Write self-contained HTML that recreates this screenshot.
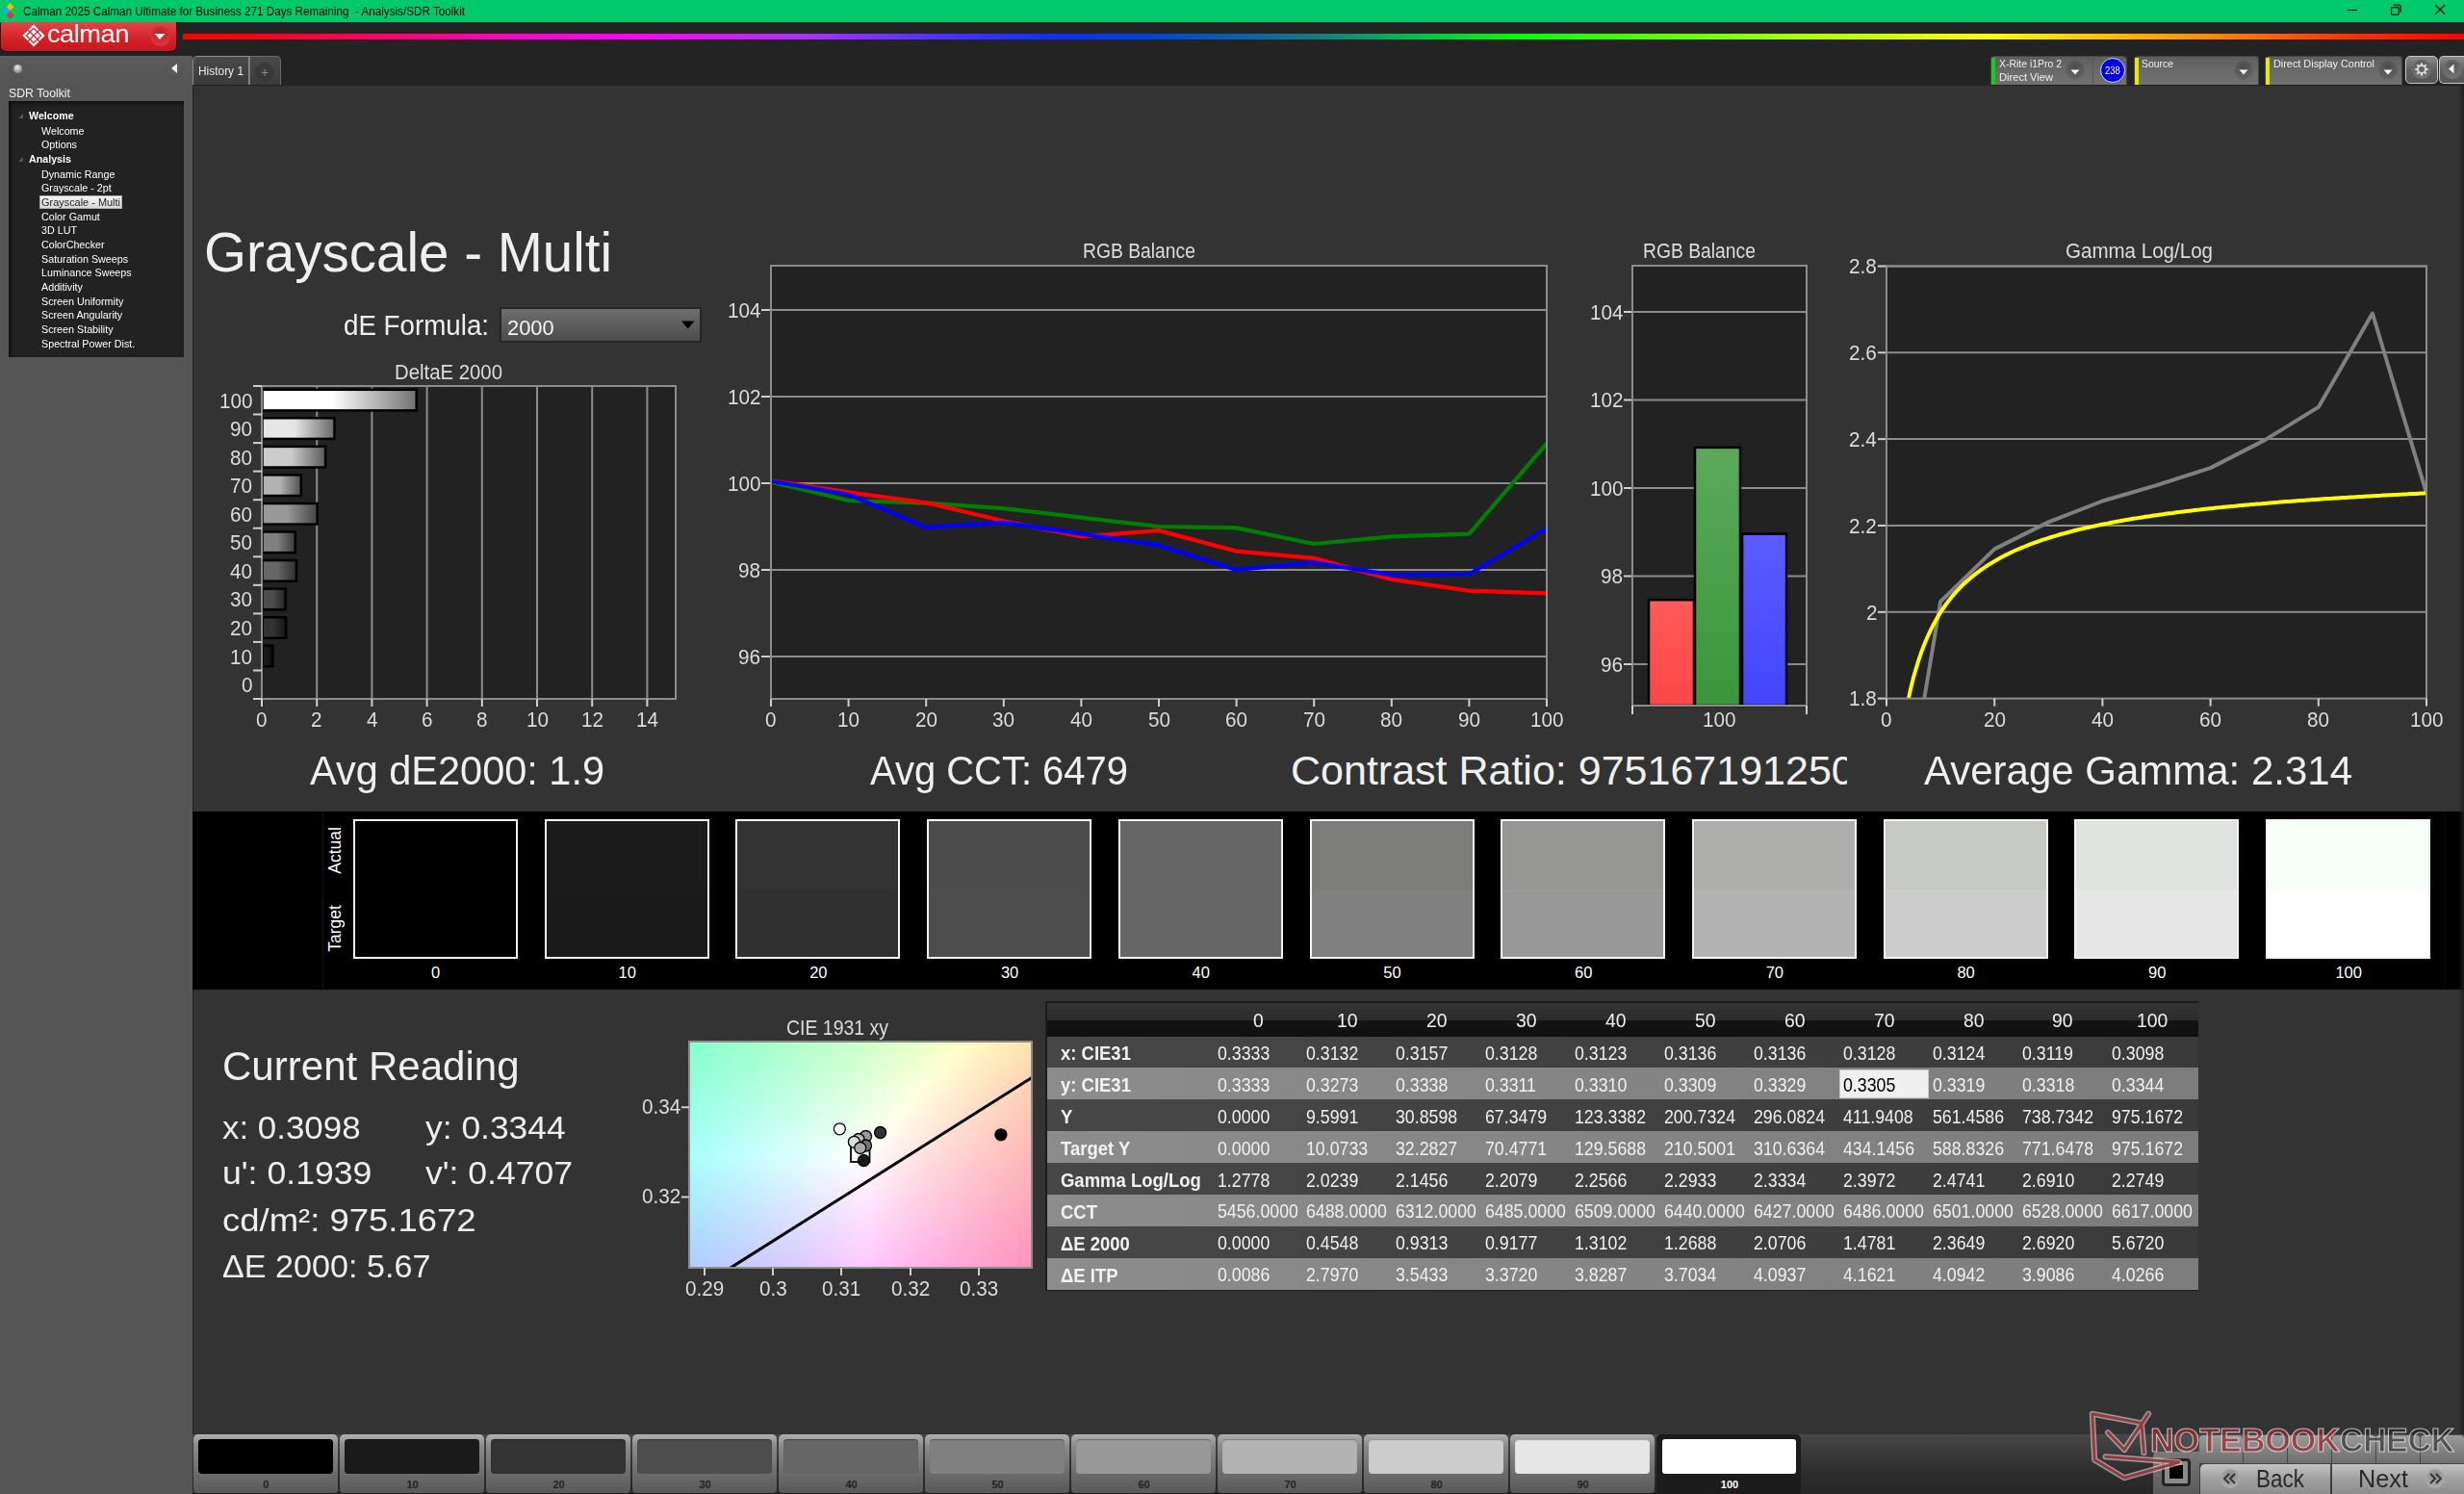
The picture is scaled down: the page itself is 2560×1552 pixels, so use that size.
<!DOCTYPE html>
<html><head><meta charset="utf-8"><title>Calman - Grayscale Multi</title>
<style>
html,body{margin:0;padding:0;}
body{width:2560px;height:1552px;overflow:hidden;position:relative;background:#333;font-family:"Liberation Sans",sans-serif;}
.b{position:absolute;}
.t{position:absolute;white-space:pre;transform-origin:0 50%;}
svg.b{overflow:visible;}
</style></head><body>
<div class="b" style="left:0px;top:0px;width:2560px;height:23px;background:#00c96b;"></div>
<svg class="b" style="left:1px;top:2px" width="19" height="19" viewBox="0 0 19 19"><path d="M9.5 1 L13.5 5 L9.5 9 L5.5 5Z" fill="#f0c000"/><path d="M14 5.5 L18 9.5 L14 13.5 L10 9.5Z" fill="#30c030"/><path d="M5 5.5 L9 9.5 L5 13.5 L1 9.5Z" fill="#30a0f0"/><path d="M9.5 10 L13.5 14 L9.5 18 L5.5 14Z" fill="#e03060"/></svg>
<div class="t" style="left:24.0px;top:5.9px;font-size:12.5px;line-height:12.5px;color:#000;transform:scaleX(0.9350);">Calman 2025 Calman Ultimate for Business 271 Days Remaining  - Analysis/SDR Toolkit</div>
<div class="b" style="left:2439px;top:10px;width:10px;height:1px;background:#000;"></div>
<svg class="b" style="left:2482px;top:3px" width="14" height="14"><rect x="2.6" y="4.6" width="7.6" height="7.6" rx="1" fill="none" stroke="#000" stroke-width="1.1"/><path d="M4.8 2.3 H10.6 Q12.2 2.3 12.2 3.9 V9.8" fill="none" stroke="#000" stroke-width="1.1"/></svg>
<svg class="b" style="left:2529px;top:4px" width="13" height="12"><path d="M1 1 L11.2 10.8 M11.2 1 L1 10.8" stroke="#000" stroke-width="1.1"/></svg>
<div class="b" style="left:0px;top:23px;width:2560px;height:35px;background:#232323;"></div>
<div class="b" style="left:1px;top:23px;width:182px;height:30px;background:linear-gradient(#e3454a,#d42027 60%,#c8141a);border-radius:0 0 5px 5px;box-shadow:0 1px 1px #111;"></div>
<svg class="b" style="left:21.5px;top:24.3px" width="26" height="26" viewBox="0 0 26 26"><g transform="rotate(45 13 13)"><rect x="4.8" y="4.8" width="16.4" height="16.4" fill="#fff"/><rect x="7.6" y="7.6" width="10.8" height="10.8" fill="none" stroke="#d42027" stroke-width="1.2"/><path d="M13 4.5 V21.5 M4.5 13 H21.5" stroke="#d42027" stroke-width="1.3"/></g></svg>
<div class="t" style="left:49.0px;top:22.0px;font-size:26px;line-height:26px;color:#fff;transform:scaleX(1.0500);letter-spacing:-0.5px;">calman</div>
<div class="b" style="left:156px;top:27px;width:21px;height:21px;border-radius:50%;background:radial-gradient(circle at 50% 35%,#c81a20,#d83a3f 80%);"></div>
<svg class="b" style="left:159px;top:34px" width="14" height="8"><path d="M1.5 1 L12.5 1 L7 7Z" fill="#fff"/></svg>
<div class="b" style="left:190px;top:35px;width:2370px;height:6px;background:linear-gradient(to right,#ff0000 0%,#ff0010 3%,#ff0070 9%,#ff00d0 15%,#ff00ff 20%,#b030ff 27%,#6030ff 32%,#1030ff 37.6%,#0040e0 42%,#108080 50%,#00d040 55%,#00ff00 58.6%,#a0ff00 70%,#ffff00 79%,#ff8000 89.5%,#ff3000 95%,#ff0000 100%);"></div>
<div class="b" style="left:0px;top:58px;width:200px;height:1494px;background:#555555;"></div>
<div class="b" style="left:0px;top:58px;width:200px;height:30px;background:linear-gradient(#5c5c5c,#555);border-radius:0 6px 0 0;"></div>
<div class="b" style="left:9px;top:62px;width:20px;height:20px;border-radius:50%;background:radial-gradient(circle at 50% 40%,#5a5a5a 40%,#4a4a4a);"></div>
<div class="b" style="left:14px;top:67px;width:9px;height:9px;border-radius:50%;background:radial-gradient(circle at 45% 35%,#eee,#999 60%,#666);"></div>
<div class="b" style="left:171px;top:62px;width:20px;height:20px;border-radius:50%;background:radial-gradient(circle at 50% 40%,#5a5a5a 40%,#4a4a4a);"></div>
<svg class="b" style="left:177px;top:66px" width="8" height="10"><path d="M7 0 L7 10 L1 5Z" fill="#eee"/></svg>
<div class="t" style="left:9.0px;top:90.0px;font-size:13px;line-height:13px;color:#f0f0f0;transform:scaleX(0.9458);">SDR Toolkit</div>
<div class="b" style="left:9px;top:105px;width:182px;height:266px;background:#222;box-shadow:inset 2px 2px 4px #0c0c0c;"></div>
<div class="t" style="left:30.0px;top:115.2px;font-size:11.3px;line-height:11.3px;color:#ffffff;font-weight:bold;transform:scaleX(0.9450);">Welcome</div>
<div class="t" style="left:43.0px;top:131.2px;font-size:11.3px;line-height:11.3px;color:#ffffff;transform:scaleX(0.9500);">Welcome</div>
<div class="t" style="left:43.0px;top:145.2px;font-size:11.3px;line-height:11.3px;color:#ffffff;transform:scaleX(0.9500);">Options</div>
<div class="t" style="left:30.0px;top:160.2px;font-size:11.3px;line-height:11.3px;color:#ffffff;font-weight:bold;transform:scaleX(0.9450);">Analysis</div>
<div class="t" style="left:43.0px;top:176.2px;font-size:11.3px;line-height:11.3px;color:#ffffff;transform:scaleX(0.9500);">Dynamic Range</div>
<div class="t" style="left:43.0px;top:190.2px;font-size:11.3px;line-height:11.3px;color:#ffffff;transform:scaleX(0.9500);">Grayscale - 2pt</div>
<div class="b" style="left:41px;top:203px;width:86px;height:14px;background:linear-gradient(#f4f4f4,#d8d8d8);border:1px solid #aaa;box-sizing:border-box;"></div>
<div class="t" style="left:43.0px;top:205.1px;font-size:11.3px;line-height:11.3px;color:#222;transform:scaleX(0.9674);">Grayscale - Multi</div>
<div class="t" style="left:43.0px;top:220.2px;font-size:11.3px;line-height:11.3px;color:#ffffff;transform:scaleX(0.9500);">Color Gamut</div>
<div class="t" style="left:43.0px;top:234.2px;font-size:11.3px;line-height:11.3px;color:#ffffff;transform:scaleX(0.9500);">3D LUT</div>
<div class="t" style="left:43.0px;top:249.2px;font-size:11.3px;line-height:11.3px;color:#ffffff;transform:scaleX(0.9500);">ColorChecker</div>
<div class="t" style="left:43.0px;top:264.2px;font-size:11.3px;line-height:11.3px;color:#ffffff;transform:scaleX(0.9500);">Saturation Sweeps</div>
<div class="t" style="left:43.0px;top:278.2px;font-size:11.3px;line-height:11.3px;color:#ffffff;transform:scaleX(0.9500);">Luminance Sweeps</div>
<div class="t" style="left:43.0px;top:293.2px;font-size:11.3px;line-height:11.3px;color:#ffffff;transform:scaleX(0.9500);">Additivity</div>
<div class="t" style="left:43.0px;top:308.2px;font-size:11.3px;line-height:11.3px;color:#ffffff;transform:scaleX(0.9500);">Screen Uniformity</div>
<div class="t" style="left:43.0px;top:322.2px;font-size:11.3px;line-height:11.3px;color:#ffffff;transform:scaleX(0.9500);">Screen Angularity</div>
<div class="t" style="left:43.0px;top:337.2px;font-size:11.3px;line-height:11.3px;color:#ffffff;transform:scaleX(0.9500);">Screen Stability</div>
<div class="t" style="left:43.0px;top:352.2px;font-size:11.3px;line-height:11.3px;color:#ffffff;transform:scaleX(0.9500);">Spectral Power Dist.</div>
<svg class="b" style="left:19px;top:118px" width="6" height="6"><path d="M5 0 L5 5 L0 5Z" fill="#555"/></svg>
<svg class="b" style="left:19px;top:163px" width="6" height="6"><path d="M5 0 L5 5 L0 5Z" fill="#555"/></svg>
<div class="b" style="left:200px;top:58px;width:2360px;height:30px;background:#232323;"></div>
<div class="b" style="left:200px;top:58px;width:59px;height:30px;background:linear-gradient(#4a4a4a,#3a3a3a);border:1px solid #8a8a8a;border-bottom:none;border-radius:5px 0 0 0;box-sizing:border-box;"></div>
<div class="b" style="left:259px;top:58px;width:33px;height:30px;background:linear-gradient(#4a4a4a,#3a3a3a);border:1px solid #6a6a6a;border-bottom:none;border-left:1px solid #777;border-radius:0 5px 0 0;box-sizing:border-box;"></div>
<div class="t" style="left:206.0px;top:68.4px;font-size:12.5px;line-height:12.5px;color:#e8e8e8;transform:scaleX(0.9531);">History 1</div>
<div class="b" style="left:265px;top:65px;width:20px;height:20px;border-radius:50%;background:radial-gradient(circle at 50% 40%,#3c3c3c,#343434);"></div>
<div class="t" style="left:270.9px;top:68.1px;font-size:14px;line-height:14px;color:#888;">+</div>
<div class="b" style="left:200px;top:88px;width:2360px;height:1402px;background:#333333;"></div>
<div class="b" style="left:200px;top:88px;width:2360px;height:1px;background:#222;"></div>
<div class="b" style="left:200px;top:88px;width:1px;height:1402px;background:#222;"></div>
<div class="b" style="left:2068px;top:58px;width:142px;height:30px;background:linear-gradient(#5e5e5e,#6c6c6c 60%,#707070);border-radius:4px 4px 0 0;border:1px solid #444;border-bottom:none;box-sizing:border-box;"></div>
<div class="b" style="left:2069px;top:60px;width:4px;height:28px;background:#10d010;"></div>
<div class="t" style="left:2077.0px;top:61.3px;font-size:11.5px;line-height:11.5px;color:#f0f0f0;transform:scaleX(0.9081);">X-Rite i1Pro 2</div>
<div class="t" style="left:2077.0px;top:75.3px;font-size:11.5px;line-height:11.5px;color:#f0f0f0;transform:scaleX(0.9665);">Direct View</div>
<div class="b" style="left:2146px;top:63px;width:20px;height:20px;border-radius:50%;background:radial-gradient(circle at 50% 35%,#4a4a4a,#666 80%);"></div>
<svg class="b" style="left:2151px;top:72px" width="10" height="6"><path d="M0.5 0.5 L9.5 0.5 L5 5.5Z" fill="#fff"/></svg>
<div class="b" style="left:2174px;top:60px;width:1px;height:28px;background:#555;"></div>
<div class="b" style="left:2182px;top:60px;width:26px;height:26px;border-radius:50%;background:#0000e8;border:1px solid #cfd8ff;box-sizing:border-box;"></div>
<div class="t" style="left:2187.1px;top:68.5px;font-size:10px;line-height:10px;color:#fff;transform:scaleX(0.9500);">238</div>
<div class="b" style="left:2217px;top:58px;width:130px;height:30px;background:linear-gradient(#5e5e5e,#6c6c6c 60%,#707070);border-radius:4px 4px 0 0;border:1px solid #444;border-bottom:none;box-sizing:border-box;"></div>
<div class="b" style="left:2218px;top:60px;width:4px;height:28px;background:#e8e800;"></div>
<div class="t" style="left:2225.0px;top:61.3px;font-size:11.5px;line-height:11.5px;color:#f0f0f0;transform:scaleX(0.9057);">Source</div>
<div class="b" style="left:2321px;top:63px;width:20px;height:20px;border-radius:50%;background:radial-gradient(circle at 50% 35%,#4a4a4a,#666 80%);"></div>
<svg class="b" style="left:2326px;top:72px" width="10" height="6"><path d="M0.5 0.5 L9.5 0.5 L5 5.5Z" fill="#fff"/></svg>
<div class="b" style="left:2353px;top:58px;width:143px;height:30px;background:linear-gradient(#5e5e5e,#6c6c6c 60%,#707070);border-radius:4px 4px 0 0;border:1px solid #444;border-bottom:none;box-sizing:border-box;"></div>
<div class="b" style="left:2354px;top:60px;width:4px;height:28px;background:#e8e800;"></div>
<div class="t" style="left:2362.0px;top:61.3px;font-size:11.5px;line-height:11.5px;color:#f0f0f0;transform:scaleX(0.9443);">Direct Display Control</div>
<div class="b" style="left:2471px;top:63px;width:20px;height:20px;border-radius:50%;background:radial-gradient(circle at 50% 35%,#4a4a4a,#666 80%);"></div>
<svg class="b" style="left:2476px;top:72px" width="10" height="6"><path d="M0.5 0.5 L9.5 0.5 L5 5.5Z" fill="#fff"/></svg>
<div class="b" style="left:2499px;top:58px;width:34px;height:29px;background:linear-gradient(#8a8a8a,#606060 50%,#555);border:1px solid #c8c8c8;border-radius:5px;box-sizing:border-box;"></div>
<div class="b" style="left:2506px;top:62px;width:20px;height:20px;border-radius:50%;background:radial-gradient(circle at 50% 30%,#555,#7a7a7a 90%);"></div>
<svg class="b" style="left:2509px;top:65px" width="14" height="14" viewBox="0 0 14 14"><g fill="#d8d8d8"><rect x="6" y="0.3" width="2" height="3" transform="rotate(0 7 7)"/><rect x="6" y="0.3" width="2" height="3" transform="rotate(45 7 7)"/><rect x="6" y="0.3" width="2" height="3" transform="rotate(90 7 7)"/><rect x="6" y="0.3" width="2" height="3" transform="rotate(135 7 7)"/><rect x="6" y="0.3" width="2" height="3" transform="rotate(180 7 7)"/><rect x="6" y="0.3" width="2" height="3" transform="rotate(225 7 7)"/><rect x="6" y="0.3" width="2" height="3" transform="rotate(270 7 7)"/><rect x="6" y="0.3" width="2" height="3" transform="rotate(315 7 7)"/></g><circle cx="7" cy="7" r="4" fill="none" stroke="#d8d8d8" stroke-width="2"/><circle cx="7" cy="7" r="2.3" fill="#666"/></svg>
<div class="b" style="left:2534px;top:58px;width:26px;height:29px;background:linear-gradient(#8a8a8a,#606060 50%,#555);border:1px solid #c8c8c8;border-right:none;border-radius:5px 0 0 5px;box-sizing:border-box;"></div>
<div class="b" style="left:2538px;top:62px;width:20px;height:20px;border-radius:50%;background:radial-gradient(circle at 50% 30%,#555,#7a7a7a 90%);"></div>
<svg class="b" style="left:2543px;top:66px" width="8" height="12"><path d="M6.5 0.5 L6.5 10.5 L1 5.5Z" fill="#eee"/></svg>
<div class="t" style="left:212.0px;top:232.9px;font-size:58px;line-height:58px;color:#efefef;transform:scaleX(0.9746);">Grayscale - Multi</div>
<div class="t" style="left:357.0px;top:323.5px;font-size:29px;line-height:29px;color:#f0f0f0;transform:scaleX(0.9561);">dE Formula:</div>
<div class="b" style="left:519px;top:319px;width:210px;height:37px;background:linear-gradient(#6e6e6e,#4c4c4c);border:2px solid #262626;box-sizing:border-box;"></div>
<div class="t" style="left:527.0px;top:330.4px;font-size:22px;line-height:22px;color:#f4f4f4;transform:scaleX(0.9911);">2000</div>
<svg class="b" style="left:708px;top:333px" width="14" height="9"><path d="M0 0.5 L13.5 0.5 L6.75 8.5Z" fill="#000"/></svg>
<div class="t" style="left:410.0px;top:375.5px;font-size:21.8px;line-height:21.8px;color:#dcdcdc;transform:scaleX(0.9335);">DeltaE 2000</div>
<svg class="b" style="left:255px;top:395px" width="460" height="350" viewBox="255 395 460 350">
<rect x="272" y="401" width="430" height="325" fill="#222"/>
<line x1="329.2" y1="401" x2="329.2" y2="726" stroke="#8c8c8c" stroke-width="2"/>
<line x1="386.4" y1="401" x2="386.4" y2="726" stroke="#8c8c8c" stroke-width="2"/>
<line x1="443.6" y1="401" x2="443.6" y2="726" stroke="#8c8c8c" stroke-width="2"/>
<line x1="500.8" y1="401" x2="500.8" y2="726" stroke="#8c8c8c" stroke-width="2"/>
<line x1="558.0" y1="401" x2="558.0" y2="726" stroke="#8c8c8c" stroke-width="2"/>
<line x1="615.2" y1="401" x2="615.2" y2="726" stroke="#8c8c8c" stroke-width="2"/>
<line x1="672.4" y1="401" x2="672.4" y2="726" stroke="#8c8c8c" stroke-width="2"/>
<defs>
<linearGradient id="g0" x1="0" x2="1" y1="0" y2="0"><stop offset="0" stop-color="rgb(0,0,0)"/><stop offset="0.45" stop-color="rgb(0,0,0)"/><stop offset="1" stop-color="rgb(0,0,0)"/></linearGradient>
<linearGradient id="g1" x1="0" x2="1" y1="0" y2="0"><stop offset="0" stop-color="rgb(26,26,26)"/><stop offset="0.45" stop-color="rgb(26,26,26)"/><stop offset="1" stop-color="rgb(11,11,11)"/></linearGradient>
<linearGradient id="g2" x1="0" x2="1" y1="0" y2="0"><stop offset="0" stop-color="rgb(51,51,51)"/><stop offset="0.45" stop-color="rgb(51,51,51)"/><stop offset="1" stop-color="rgb(22,22,22)"/></linearGradient>
<linearGradient id="g3" x1="0" x2="1" y1="0" y2="0"><stop offset="0" stop-color="rgb(77,77,77)"/><stop offset="0.45" stop-color="rgb(77,77,77)"/><stop offset="1" stop-color="rgb(34,34,34)"/></linearGradient>
<linearGradient id="g4" x1="0" x2="1" y1="0" y2="0"><stop offset="0" stop-color="rgb(102,102,102)"/><stop offset="0.45" stop-color="rgb(102,102,102)"/><stop offset="1" stop-color="rgb(45,45,45)"/></linearGradient>
<linearGradient id="g5" x1="0" x2="1" y1="0" y2="0"><stop offset="0" stop-color="rgb(128,128,128)"/><stop offset="0.45" stop-color="rgb(128,128,128)"/><stop offset="1" stop-color="rgb(57,57,57)"/></linearGradient>
<linearGradient id="g6" x1="0" x2="1" y1="0" y2="0"><stop offset="0" stop-color="rgb(153,153,153)"/><stop offset="0.45" stop-color="rgb(153,153,153)"/><stop offset="1" stop-color="rgb(68,68,68)"/></linearGradient>
<linearGradient id="g7" x1="0" x2="1" y1="0" y2="0"><stop offset="0" stop-color="rgb(179,179,179)"/><stop offset="0.45" stop-color="rgb(179,179,179)"/><stop offset="1" stop-color="rgb(80,80,80)"/></linearGradient>
<linearGradient id="g8" x1="0" x2="1" y1="0" y2="0"><stop offset="0" stop-color="rgb(204,204,204)"/><stop offset="0.45" stop-color="rgb(204,204,204)"/><stop offset="1" stop-color="rgb(91,91,91)"/></linearGradient>
<linearGradient id="g9" x1="0" x2="1" y1="0" y2="0"><stop offset="0" stop-color="rgb(230,230,230)"/><stop offset="0.45" stop-color="rgb(230,230,230)"/><stop offset="1" stop-color="rgb(103,103,103)"/></linearGradient>
<linearGradient id="g10" x1="0" x2="1" y1="0" y2="0"><stop offset="0" stop-color="rgb(255,255,255)"/><stop offset="0.45" stop-color="rgb(255,255,255)"/><stop offset="1" stop-color="rgb(114,114,114)"/></linearGradient>
</defs>
<rect x="272.5" y="670.7" width="11.0" height="21.6" fill="url(#g1)" stroke="#000" stroke-width="2.5"/>
<rect x="272.5" y="641.2" width="24.6" height="21.6" fill="url(#g2)" stroke="#000" stroke-width="2.5"/>
<rect x="272.5" y="611.6" width="24.2" height="21.6" fill="url(#g3)" stroke="#000" stroke-width="2.5"/>
<rect x="272.5" y="582.1" width="35.5" height="21.6" fill="url(#g4)" stroke="#000" stroke-width="2.5"/>
<rect x="272.5" y="552.5" width="34.3" height="21.6" fill="url(#g5)" stroke="#000" stroke-width="2.5"/>
<rect x="272.5" y="523.0" width="57.2" height="21.6" fill="url(#g6)" stroke="#000" stroke-width="2.5"/>
<rect x="272.5" y="493.4" width="40.3" height="21.6" fill="url(#g7)" stroke="#000" stroke-width="2.5"/>
<rect x="272.5" y="463.9" width="65.6" height="21.6" fill="url(#g8)" stroke="#000" stroke-width="2.5"/>
<rect x="272.5" y="434.3" width="75.0" height="21.6" fill="url(#g9)" stroke="#000" stroke-width="2.5"/>
<rect x="272.5" y="404.8" width="160.2" height="21.6" fill="url(#g10)" stroke="#000" stroke-width="2.5"/>
<rect x="272" y="401" width="430" height="325" fill="none" stroke="#8c8c8c" stroke-width="2"/>
<line x1="263" y1="726.0" x2="272" y2="726.0" stroke="#cfcfcf" stroke-width="2"/>
<line x1="263" y1="696.5" x2="272" y2="696.5" stroke="#cfcfcf" stroke-width="2"/>
<line x1="263" y1="666.9" x2="272" y2="666.9" stroke="#cfcfcf" stroke-width="2"/>
<line x1="263" y1="637.4" x2="272" y2="637.4" stroke="#cfcfcf" stroke-width="2"/>
<line x1="263" y1="607.8" x2="272" y2="607.8" stroke="#cfcfcf" stroke-width="2"/>
<line x1="263" y1="578.3" x2="272" y2="578.3" stroke="#cfcfcf" stroke-width="2"/>
<line x1="263" y1="548.7" x2="272" y2="548.7" stroke="#cfcfcf" stroke-width="2"/>
<line x1="263" y1="519.2" x2="272" y2="519.2" stroke="#cfcfcf" stroke-width="2"/>
<line x1="263" y1="489.6" x2="272" y2="489.6" stroke="#cfcfcf" stroke-width="2"/>
<line x1="263" y1="460.1" x2="272" y2="460.1" stroke="#cfcfcf" stroke-width="2"/>
<line x1="263" y1="430.5" x2="272" y2="430.5" stroke="#cfcfcf" stroke-width="2"/>
<line x1="263" y1="401.0" x2="272" y2="401.0" stroke="#cfcfcf" stroke-width="2"/>
<line x1="272.0" y1="726" x2="272.0" y2="734" stroke="#cfcfcf" stroke-width="2"/>
<line x1="329.2" y1="726" x2="329.2" y2="734" stroke="#cfcfcf" stroke-width="2"/>
<line x1="386.4" y1="726" x2="386.4" y2="734" stroke="#cfcfcf" stroke-width="2"/>
<line x1="443.6" y1="726" x2="443.6" y2="734" stroke="#cfcfcf" stroke-width="2"/>
<line x1="500.8" y1="726" x2="500.8" y2="734" stroke="#cfcfcf" stroke-width="2"/>
<line x1="558.0" y1="726" x2="558.0" y2="734" stroke="#cfcfcf" stroke-width="2"/>
<line x1="615.2" y1="726" x2="615.2" y2="734" stroke="#cfcfcf" stroke-width="2"/>
<line x1="672.4" y1="726" x2="672.4" y2="734" stroke="#cfcfcf" stroke-width="2"/>
</svg>
<div class="t" style="left:250.5px;top:701.0px;font-size:22.5px;line-height:22.5px;color:#dcdcdc;transform:scaleX(0.9200);">0</div>
<div class="t" style="left:239.0px;top:671.5px;font-size:22.5px;line-height:22.5px;color:#dcdcdc;transform:scaleX(0.9200);">10</div>
<div class="t" style="left:239.0px;top:641.9px;font-size:22.5px;line-height:22.5px;color:#dcdcdc;transform:scaleX(0.9200);">20</div>
<div class="t" style="left:239.0px;top:612.4px;font-size:22.5px;line-height:22.5px;color:#dcdcdc;transform:scaleX(0.9200);">30</div>
<div class="t" style="left:239.0px;top:582.9px;font-size:22.5px;line-height:22.5px;color:#dcdcdc;transform:scaleX(0.9200);">40</div>
<div class="t" style="left:239.0px;top:553.3px;font-size:22.5px;line-height:22.5px;color:#dcdcdc;transform:scaleX(0.9200);">50</div>
<div class="t" style="left:239.0px;top:523.8px;font-size:22.5px;line-height:22.5px;color:#dcdcdc;transform:scaleX(0.9200);">60</div>
<div class="t" style="left:239.0px;top:494.2px;font-size:22.5px;line-height:22.5px;color:#dcdcdc;transform:scaleX(0.9200);">70</div>
<div class="t" style="left:239.0px;top:464.7px;font-size:22.5px;line-height:22.5px;color:#dcdcdc;transform:scaleX(0.9200);">80</div>
<div class="t" style="left:239.0px;top:435.1px;font-size:22.5px;line-height:22.5px;color:#dcdcdc;transform:scaleX(0.9200);">90</div>
<div class="t" style="left:227.5px;top:405.6px;font-size:22.5px;line-height:22.5px;color:#dcdcdc;transform:scaleX(0.9200);">100</div>
<div class="t" style="left:266.2px;top:736.5px;font-size:22.5px;line-height:22.5px;color:#dcdcdc;transform:scaleX(0.9200);">0</div>
<div class="t" style="left:323.4px;top:736.5px;font-size:22.5px;line-height:22.5px;color:#dcdcdc;transform:scaleX(0.9200);">2</div>
<div class="t" style="left:380.6px;top:736.5px;font-size:22.5px;line-height:22.5px;color:#dcdcdc;transform:scaleX(0.9200);">4</div>
<div class="t" style="left:437.8px;top:736.5px;font-size:22.5px;line-height:22.5px;color:#dcdcdc;transform:scaleX(0.9200);">6</div>
<div class="t" style="left:495.0px;top:736.5px;font-size:22.5px;line-height:22.5px;color:#dcdcdc;transform:scaleX(0.9200);">8</div>
<div class="t" style="left:546.5px;top:736.5px;font-size:22.5px;line-height:22.5px;color:#dcdcdc;transform:scaleX(0.9200);">10</div>
<div class="t" style="left:603.7px;top:736.5px;font-size:22.5px;line-height:22.5px;color:#dcdcdc;transform:scaleX(0.9200);">12</div>
<div class="t" style="left:660.9px;top:736.5px;font-size:22.5px;line-height:22.5px;color:#dcdcdc;transform:scaleX(0.9200);">14</div>
<div class="t" style="left:1124.5px;top:250.0px;font-size:21.8px;line-height:21.8px;color:#dcdcdc;transform:scaleX(0.8859);">RGB Balance</div>
<svg class="b" style="left:780px;top:260px" width="840" height="480" viewBox="780 260 840 480">
<rect x="801" y="276" width="806" height="450" fill="#222"/>
<line x1="801" y1="322.0" x2="1607" y2="322.0" stroke="#8c8c8c" stroke-width="2"/>
<line x1="791" y1="322.0" x2="801" y2="322.0" stroke="#cfcfcf" stroke-width="2"/>
<line x1="801" y1="412.0" x2="1607" y2="412.0" stroke="#8c8c8c" stroke-width="2"/>
<line x1="791" y1="412.0" x2="801" y2="412.0" stroke="#cfcfcf" stroke-width="2"/>
<line x1="801" y1="502.0" x2="1607" y2="502.0" stroke="#8c8c8c" stroke-width="2"/>
<line x1="791" y1="502.0" x2="801" y2="502.0" stroke="#cfcfcf" stroke-width="2"/>
<line x1="801" y1="592.0" x2="1607" y2="592.0" stroke="#8c8c8c" stroke-width="2"/>
<line x1="791" y1="592.0" x2="801" y2="592.0" stroke="#cfcfcf" stroke-width="2"/>
<line x1="801" y1="682.0" x2="1607" y2="682.0" stroke="#8c8c8c" stroke-width="2"/>
<line x1="791" y1="682.0" x2="801" y2="682.0" stroke="#cfcfcf" stroke-width="2"/>
<polyline points="801.0,500.6 881.6,520.0 962.2,522.7 1042.8,528.1 1123.4,537.6 1204.0,547.0 1284.6,548.4 1365.2,565.0 1445.8,557.4 1526.4,554.7 1607.0,460.6" fill="none" stroke="#008000" stroke-width="4.2" stroke-linejoin="round"/>
<polyline points="801.0,499.3 881.6,511.4 962.2,522.3 1042.8,541.2 1123.4,557.4 1204.0,551.1 1284.6,572.6 1365.2,579.9 1445.8,601.9 1526.4,613.6 1607.0,616.3" fill="none" stroke="#ff0000" stroke-width="4.2" stroke-linejoin="round"/>
<polyline points="801.0,499.8 881.6,513.7 962.2,547.9 1042.8,542.9 1123.4,554.7 1204.0,566.4 1284.6,592.0 1365.2,584.3 1445.8,597.4 1526.4,596.5 1607.0,548.8" fill="none" stroke="#0000ff" stroke-width="4.2" stroke-linejoin="round"/>
<rect x="801" y="276" width="806" height="450" fill="none" stroke="#8c8c8c" stroke-width="2"/>
<line x1="801.0" y1="726" x2="801.0" y2="734" stroke="#cfcfcf" stroke-width="2"/>
<line x1="881.6" y1="726" x2="881.6" y2="734" stroke="#cfcfcf" stroke-width="2"/>
<line x1="962.2" y1="726" x2="962.2" y2="734" stroke="#cfcfcf" stroke-width="2"/>
<line x1="1042.8" y1="726" x2="1042.8" y2="734" stroke="#cfcfcf" stroke-width="2"/>
<line x1="1123.4" y1="726" x2="1123.4" y2="734" stroke="#cfcfcf" stroke-width="2"/>
<line x1="1204.0" y1="726" x2="1204.0" y2="734" stroke="#cfcfcf" stroke-width="2"/>
<line x1="1284.6" y1="726" x2="1284.6" y2="734" stroke="#cfcfcf" stroke-width="2"/>
<line x1="1365.2" y1="726" x2="1365.2" y2="734" stroke="#cfcfcf" stroke-width="2"/>
<line x1="1445.8" y1="726" x2="1445.8" y2="734" stroke="#cfcfcf" stroke-width="2"/>
<line x1="1526.4" y1="726" x2="1526.4" y2="734" stroke="#cfcfcf" stroke-width="2"/>
<line x1="1607.0" y1="726" x2="1607.0" y2="734" stroke="#cfcfcf" stroke-width="2"/>
</svg>
<div class="t" style="left:755.5px;top:311.8px;font-size:22.5px;line-height:22.5px;color:#dcdcdc;transform:scaleX(0.9200);">104</div>
<div class="t" style="left:755.5px;top:401.8px;font-size:22.5px;line-height:22.5px;color:#dcdcdc;transform:scaleX(0.9200);">102</div>
<div class="t" style="left:755.5px;top:491.8px;font-size:22.5px;line-height:22.5px;color:#dcdcdc;transform:scaleX(0.9200);">100</div>
<div class="t" style="left:767.0px;top:581.8px;font-size:22.5px;line-height:22.5px;color:#dcdcdc;transform:scaleX(0.9200);">98</div>
<div class="t" style="left:767.0px;top:671.8px;font-size:22.5px;line-height:22.5px;color:#dcdcdc;transform:scaleX(0.9200);">96</div>
<div class="t" style="left:795.2px;top:736.5px;font-size:22.5px;line-height:22.5px;color:#dcdcdc;transform:scaleX(0.9200);">0</div>
<div class="t" style="left:870.1px;top:736.5px;font-size:22.5px;line-height:22.5px;color:#dcdcdc;transform:scaleX(0.9200);">10</div>
<div class="t" style="left:950.7px;top:736.5px;font-size:22.5px;line-height:22.5px;color:#dcdcdc;transform:scaleX(0.9200);">20</div>
<div class="t" style="left:1031.3px;top:736.5px;font-size:22.5px;line-height:22.5px;color:#dcdcdc;transform:scaleX(0.9200);">30</div>
<div class="t" style="left:1111.9px;top:736.5px;font-size:22.5px;line-height:22.5px;color:#dcdcdc;transform:scaleX(0.9200);">40</div>
<div class="t" style="left:1192.5px;top:736.5px;font-size:22.5px;line-height:22.5px;color:#dcdcdc;transform:scaleX(0.9200);">50</div>
<div class="t" style="left:1273.1px;top:736.5px;font-size:22.5px;line-height:22.5px;color:#dcdcdc;transform:scaleX(0.9200);">60</div>
<div class="t" style="left:1353.7px;top:736.5px;font-size:22.5px;line-height:22.5px;color:#dcdcdc;transform:scaleX(0.9200);">70</div>
<div class="t" style="left:1434.3px;top:736.5px;font-size:22.5px;line-height:22.5px;color:#dcdcdc;transform:scaleX(0.9200);">80</div>
<div class="t" style="left:1514.9px;top:736.5px;font-size:22.5px;line-height:22.5px;color:#dcdcdc;transform:scaleX(0.9200);">90</div>
<div class="t" style="left:1589.7px;top:736.5px;font-size:22.5px;line-height:22.5px;color:#dcdcdc;transform:scaleX(0.9200);">100</div>
<div class="t" style="left:1706.5px;top:250.0px;font-size:21.8px;line-height:21.8px;color:#dcdcdc;transform:scaleX(0.8859);">RGB Balance</div>
<svg class="b" style="left:1680px;top:260px" width="210" height="490" viewBox="1680 260 210 490">
<defs><linearGradient id="rg" x1="0" y1="0" x2="0" y2="1"><stop offset="0" stop-color="#ff5a5a"/><stop offset="1" stop-color="#ff4646"/></linearGradient><linearGradient id="gg" x1="0" y1="0" x2="0" y2="1"><stop offset="0" stop-color="#5aaa5a"/><stop offset="1" stop-color="#3a963a"/></linearGradient><linearGradient id="bg" x1="0" y1="0" x2="0" y2="1"><stop offset="0" stop-color="#5c5cff"/><stop offset="1" stop-color="#4444ff"/></linearGradient></defs>
<rect x="1696" y="276" width="181" height="457" fill="#222"/>
<line x1="1696" y1="324.0" x2="1877" y2="324.0" stroke="#8c8c8c" stroke-width="2"/>
<line x1="1687" y1="324.0" x2="1696" y2="324.0" stroke="#cfcfcf" stroke-width="2"/>
<line x1="1696" y1="415.5" x2="1877" y2="415.5" stroke="#8c8c8c" stroke-width="2"/>
<line x1="1687" y1="415.5" x2="1696" y2="415.5" stroke="#cfcfcf" stroke-width="2"/>
<line x1="1696" y1="507.0" x2="1877" y2="507.0" stroke="#8c8c8c" stroke-width="2"/>
<line x1="1687" y1="507.0" x2="1696" y2="507.0" stroke="#cfcfcf" stroke-width="2"/>
<line x1="1696" y1="598.5" x2="1877" y2="598.5" stroke="#8c8c8c" stroke-width="2"/>
<line x1="1687" y1="598.5" x2="1696" y2="598.5" stroke="#cfcfcf" stroke-width="2"/>
<line x1="1696" y1="690.0" x2="1877" y2="690.0" stroke="#8c8c8c" stroke-width="2"/>
<line x1="1687" y1="690.0" x2="1696" y2="690.0" stroke="#cfcfcf" stroke-width="2"/>
<rect x="1713" y="623.2" width="47" height="109.8" fill="url(#rg)" stroke="#000" stroke-width="2.5"/>
<rect x="1761" y="464.9" width="47" height="268.1" fill="url(#gg)" stroke="#000" stroke-width="2.5"/>
<rect x="1810" y="554.6" width="46" height="178.4" fill="url(#bg)" stroke="#000" stroke-width="2.5"/>
<rect x="1696" y="276" width="181" height="457" fill="none" stroke="#8c8c8c" stroke-width="2"/>
<line x1="1696" y1="733" x2="1696" y2="742" stroke="#cfcfcf" stroke-width="2"/>
<line x1="1877" y1="733" x2="1877" y2="742" stroke="#cfcfcf" stroke-width="2"/>
</svg>
<div class="t" style="left:1651.5px;top:313.8px;font-size:22.5px;line-height:22.5px;color:#dcdcdc;transform:scaleX(0.9200);">104</div>
<div class="t" style="left:1651.5px;top:405.3px;font-size:22.5px;line-height:22.5px;color:#dcdcdc;transform:scaleX(0.9200);">102</div>
<div class="t" style="left:1651.5px;top:496.8px;font-size:22.5px;line-height:22.5px;color:#dcdcdc;transform:scaleX(0.9200);">100</div>
<div class="t" style="left:1663.0px;top:588.3px;font-size:22.5px;line-height:22.5px;color:#dcdcdc;transform:scaleX(0.9200);">98</div>
<div class="t" style="left:1663.0px;top:679.8px;font-size:22.5px;line-height:22.5px;color:#dcdcdc;transform:scaleX(0.9200);">96</div>
<div class="t" style="left:1769.2px;top:737.0px;font-size:22.5px;line-height:22.5px;color:#dcdcdc;transform:scaleX(0.9200);">100</div>
<div class="t" style="left:2145.5px;top:250.0px;font-size:21.8px;line-height:21.8px;color:#dcdcdc;transform:scaleX(0.9423);">Gamma Log/Log</div>
<svg class="b" style="left:1940px;top:260px" width="600" height="480" viewBox="1940 260 600 480">
<defs><clipPath id="gc"><rect x="1960" y="276.5" width="561" height="449.1"/></clipPath></defs>
<rect x="1960" y="276.5" width="561" height="449.1" fill="#222"/>
<line x1="1960" y1="276.5" x2="2521" y2="276.5" stroke="#8c8c8c" stroke-width="2"/>
<line x1="1960" y1="366.3" x2="2521" y2="366.3" stroke="#8c8c8c" stroke-width="2"/>
<line x1="1960" y1="456.1" x2="2521" y2="456.1" stroke="#8c8c8c" stroke-width="2"/>
<line x1="1960" y1="546.0" x2="2521" y2="546.0" stroke="#8c8c8c" stroke-width="2"/>
<line x1="1960" y1="635.8" x2="2521" y2="635.8" stroke="#8c8c8c" stroke-width="2"/>
<line x1="1951" y1="276.5" x2="1960" y2="276.5" stroke="#cfcfcf" stroke-width="2"/>
<line x1="1951" y1="366.3" x2="1960" y2="366.3" stroke="#cfcfcf" stroke-width="2"/>
<line x1="1951" y1="456.1" x2="1960" y2="456.1" stroke="#cfcfcf" stroke-width="2"/>
<line x1="1951" y1="546.0" x2="1960" y2="546.0" stroke="#cfcfcf" stroke-width="2"/>
<line x1="1951" y1="635.8" x2="1960" y2="635.8" stroke="#cfcfcf" stroke-width="2"/>
<line x1="1951" y1="725.6" x2="1960" y2="725.6" stroke="#cfcfcf" stroke-width="2"/>
<g clip-path="url(#gc)"><polyline points="1960.0,960.1 2016.1,625.0 2072.2,570.4 2128.3,542.4 2184.4,520.5 2240.5,504.1 2296.6,486.1 2352.7,457.4 2408.8,422.9 2464.9,325.5 2521.0,512.3" fill="none" stroke="#808080" stroke-width="4" stroke-linejoin="round"/>
<polyline points="1965.6,881.7 1968.4,837.7 1971.2,805.6 1974.0,780.4 1976.8,759.8 1979.6,742.6 1982.4,727.9 1985.2,715.1 1988.0,703.8 1990.9,693.8 1993.7,684.9 1996.5,676.8 1999.3,669.4 2002.1,662.7 2004.9,656.6 2007.7,650.9 2010.5,645.7 2013.3,640.8 2016.1,636.2 2018.9,632.0 2021.7,628.0 2024.5,624.2 2027.3,620.7 2030.1,617.4 2032.9,614.2 2035.7,611.3 2038.5,608.4 2041.3,605.8 2044.2,603.2 2047.0,600.8 2049.8,598.4 2052.6,596.2 2055.4,594.1 2058.2,592.0 2061.0,590.1 2063.8,588.2 2066.6,586.4 2069.4,584.7 2072.2,583.0 2075.0,581.4 2077.8,579.8 2080.6,578.3 2083.4,576.9 2086.2,575.5 2089.0,574.1 2091.8,572.8 2094.6,571.5 2097.4,570.3 2100.2,569.1 2103.1,568.0 2105.9,566.8 2108.7,565.7 2111.5,564.7 2114.3,563.7 2117.1,562.7 2119.9,561.7 2122.7,560.7 2125.5,559.8 2128.3,558.9 2131.1,558.0 2133.9,557.2 2136.7,556.3 2139.5,555.5 2142.3,554.7 2145.1,554.0 2147.9,553.2 2150.7,552.5 2153.5,551.7 2156.3,551.0 2159.2,550.3 2162.0,549.6 2164.8,549.0 2167.6,548.3 2170.4,547.7 2173.2,547.1 2176.0,546.5 2178.8,545.9 2181.6,545.3 2184.4,544.7 2187.2,544.1 2190.0,543.6 2192.8,543.0 2195.6,542.5 2198.4,542.0 2201.2,541.5 2204.0,541.0 2206.8,540.5 2209.6,540.0 2212.4,539.5 2215.3,539.0 2218.1,538.6 2220.9,538.1 2223.7,537.7 2226.5,537.3 2229.3,536.8 2232.1,536.4 2234.9,536.0 2237.7,535.6 2240.5,535.2 2243.3,534.8 2246.1,534.4 2248.9,534.0 2251.7,533.6 2254.5,533.2 2257.3,532.9 2260.1,532.5 2262.9,532.1 2265.7,531.8 2268.6,531.4 2271.4,531.1 2274.2,530.8 2277.0,530.4 2279.8,530.1 2282.6,529.8 2285.4,529.5 2288.2,529.1 2291.0,528.8 2293.8,528.5 2296.6,528.2 2299.4,527.9 2302.2,527.6 2305.0,527.3 2307.8,527.1 2310.6,526.8 2313.4,526.5 2316.2,526.2 2319.0,525.9 2321.8,525.7 2324.7,525.4 2327.5,525.1 2330.3,524.9 2333.1,524.6 2335.9,524.4 2338.7,524.1 2341.5,523.9 2344.3,523.6 2347.1,523.4 2349.9,523.2 2352.7,522.9 2355.5,522.7 2358.3,522.4 2361.1,522.2 2363.9,522.0 2366.7,521.8 2369.5,521.5 2372.3,521.3 2375.1,521.1 2377.9,520.9 2380.8,520.7 2383.6,520.5 2386.4,520.3 2389.2,520.1 2392.0,519.9 2394.8,519.7 2397.6,519.5 2400.4,519.3 2403.2,519.1 2406.0,518.9 2408.8,518.7 2411.6,518.5 2414.4,518.3 2417.2,518.1 2420.0,517.9 2422.8,517.8 2425.6,517.6 2428.4,517.4 2431.2,517.2 2434.0,517.0 2436.8,516.9 2439.7,516.7 2442.5,516.5 2445.3,516.4 2448.1,516.2 2450.9,516.0 2453.7,515.9 2456.5,515.7 2459.3,515.5 2462.1,515.4 2464.9,515.2 2467.7,515.1 2470.5,514.9 2473.3,514.8 2476.1,514.6 2478.9,514.5 2481.7,514.3 2484.5,514.2 2487.3,514.0 2490.1,513.9 2492.9,513.7 2495.8,513.6 2498.6,513.4 2501.4,513.3 2504.2,513.1 2507.0,513.0 2509.8,512.9 2512.6,512.7 2515.4,512.6 2518.2,512.5 2521.0,512.3" fill="none" stroke="#ffff00" stroke-width="4"/></g>
<rect x="1960" y="276.5" width="561" height="449.1" fill="none" stroke="#8c8c8c" stroke-width="2"/>
<line x1="1960.0" y1="725.6" x2="1960.0" y2="733.6" stroke="#cfcfcf" stroke-width="2"/>
<line x1="2072.2" y1="725.6" x2="2072.2" y2="733.6" stroke="#cfcfcf" stroke-width="2"/>
<line x1="2184.4" y1="725.6" x2="2184.4" y2="733.6" stroke="#cfcfcf" stroke-width="2"/>
<line x1="2296.6" y1="725.6" x2="2296.6" y2="733.6" stroke="#cfcfcf" stroke-width="2"/>
<line x1="2408.8" y1="725.6" x2="2408.8" y2="733.6" stroke="#cfcfcf" stroke-width="2"/>
<line x1="2521.0" y1="725.6" x2="2521.0" y2="733.6" stroke="#cfcfcf" stroke-width="2"/>
</svg>
<div class="t" style="left:1921.2px;top:266.3px;font-size:22.5px;line-height:22.5px;color:#dcdcdc;transform:scaleX(0.9200);">2.8</div>
<div class="t" style="left:1921.2px;top:356.1px;font-size:22.5px;line-height:22.5px;color:#dcdcdc;transform:scaleX(0.9200);">2.6</div>
<div class="t" style="left:1921.2px;top:445.9px;font-size:22.5px;line-height:22.5px;color:#dcdcdc;transform:scaleX(0.9200);">2.4</div>
<div class="t" style="left:1921.2px;top:535.8px;font-size:22.5px;line-height:22.5px;color:#dcdcdc;transform:scaleX(0.9200);">2.2</div>
<div class="t" style="left:1938.5px;top:625.6px;font-size:22.5px;line-height:22.5px;color:#dcdcdc;transform:scaleX(0.9200);">2</div>
<div class="t" style="left:1921.2px;top:715.4px;font-size:22.5px;line-height:22.5px;color:#dcdcdc;transform:scaleX(0.9200);">1.8</div>
<div class="t" style="left:1954.2px;top:736.5px;font-size:22.5px;line-height:22.5px;color:#dcdcdc;transform:scaleX(0.9200);">0</div>
<div class="t" style="left:2060.7px;top:736.5px;font-size:22.5px;line-height:22.5px;color:#dcdcdc;transform:scaleX(0.9200);">20</div>
<div class="t" style="left:2172.9px;top:736.5px;font-size:22.5px;line-height:22.5px;color:#dcdcdc;transform:scaleX(0.9200);">40</div>
<div class="t" style="left:2285.1px;top:736.5px;font-size:22.5px;line-height:22.5px;color:#dcdcdc;transform:scaleX(0.9200);">60</div>
<div class="t" style="left:2397.3px;top:736.5px;font-size:22.5px;line-height:22.5px;color:#dcdcdc;transform:scaleX(0.9200);">80</div>
<div class="t" style="left:2503.7px;top:736.5px;font-size:22.5px;line-height:22.5px;color:#dcdcdc;transform:scaleX(0.9200);">100</div>
<div class="t" style="left:322.0px;top:778.6px;font-size:43px;line-height:43px;color:#f0f0f0;transform:scaleX(0.9648);">Avg dE2000: 1.9</div>
<div class="t" style="left:904.0px;top:778.6px;font-size:43px;line-height:43px;color:#f0f0f0;transform:scaleX(0.9292);">Avg CCT: 6479</div>
<div class="b" style="left:1330px;top:770px;width:589px;height:60px;overflow:hidden;">
<div class="t" style="left:11px;top:8.6px;font-size:43px;line-height:43px;color:#f0f0f0;transform:scaleX(1.0);">Contrast Ratio: 975167191250000</div></div>
<div class="t" style="left:1999.0px;top:778.6px;font-size:43px;line-height:43px;color:#f0f0f0;transform:scaleX(0.9765);">Average Gamma: 2.314</div>
<div class="b" style="left:200px;top:843px;width:2360px;height:185px;background:#000;"></div>
<div class="b" style="left:335px;top:843px;width:1px;height:185px;background:#141414;"></div>
<div class="b" style="left:2539px;top:843px;width:1px;height:185px;background:#0a0a0a;"></div>
<div class="b" style="left:367.0px;top:851px;width:171px;height:145px;border:2px solid #f4f4f4;box-sizing:border-box;background:linear-gradient(#000000 50%,#000000 50%);"></div>
<div class="t" style="left:448.1px;top:1002.2px;font-size:16.5px;line-height:16.5px;color:#fff;font-family:"Liberation Serif",serif;transform:scaleX(1.0600);">0</div>
<div class="b" style="left:565.7px;top:851px;width:171px;height:145px;border:2px solid #f4f4f4;box-sizing:border-box;background:linear-gradient(#1c1c1c 50%,#1a1a1a 50%);"></div>
<div class="t" style="left:642.5px;top:1002.2px;font-size:16.5px;line-height:16.5px;color:#fff;font-family:"Liberation Serif",serif;transform:scaleX(1.0600);">10</div>
<div class="b" style="left:764.4px;top:851px;width:171px;height:145px;border:2px solid #f4f4f4;box-sizing:border-box;background:linear-gradient(#333333 50%,#303030 50%);"></div>
<div class="t" style="left:841.2px;top:1002.2px;font-size:16.5px;line-height:16.5px;color:#fff;font-family:"Liberation Serif",serif;transform:scaleX(1.0600);">20</div>
<div class="b" style="left:963.1px;top:851px;width:171px;height:145px;border:2px solid #f4f4f4;box-sizing:border-box;background:linear-gradient(#4c4c4c 50%,#4d4d4d 50%);"></div>
<div class="t" style="left:1039.9px;top:1002.2px;font-size:16.5px;line-height:16.5px;color:#fff;font-family:"Liberation Serif",serif;transform:scaleX(1.0600);">30</div>
<div class="b" style="left:1161.8px;top:851px;width:171px;height:145px;border:2px solid #f4f4f4;box-sizing:border-box;background:linear-gradient(#666666 50%,#666666 50%);"></div>
<div class="t" style="left:1238.6px;top:1002.2px;font-size:16.5px;line-height:16.5px;color:#fff;font-family:"Liberation Serif",serif;transform:scaleX(1.0600);">40</div>
<div class="b" style="left:1360.5px;top:851px;width:171px;height:145px;border:2px solid #f4f4f4;box-sizing:border-box;background:linear-gradient(#7c7c7a 50%,#808080 50%);"></div>
<div class="t" style="left:1437.3px;top:1002.2px;font-size:16.5px;line-height:16.5px;color:#fff;font-family:"Liberation Serif",serif;transform:scaleX(1.0600);">50</div>
<div class="b" style="left:1559.2px;top:851px;width:171px;height:145px;border:2px solid #f4f4f4;box-sizing:border-box;background:linear-gradient(#969694 50%,#999999 50%);"></div>
<div class="t" style="left:1636.0px;top:1002.2px;font-size:16.5px;line-height:16.5px;color:#fff;font-family:"Liberation Serif",serif;transform:scaleX(1.0600);">60</div>
<div class="b" style="left:1757.9px;top:851px;width:171px;height:145px;border:2px solid #f4f4f4;box-sizing:border-box;background:linear-gradient(#adadab 50%,#b3b3b3 50%);"></div>
<div class="t" style="left:1834.7px;top:1002.2px;font-size:16.5px;line-height:16.5px;color:#fff;font-family:"Liberation Serif",serif;transform:scaleX(1.0600);">70</div>
<div class="b" style="left:1956.6px;top:851px;width:171px;height:145px;border:2px solid #f4f4f4;box-sizing:border-box;background:linear-gradient(#c6c8c4 50%,#cccccc 50%);"></div>
<div class="t" style="left:2033.4px;top:1002.2px;font-size:16.5px;line-height:16.5px;color:#fff;font-family:"Liberation Serif",serif;transform:scaleX(1.0600);">80</div>
<div class="b" style="left:2155.3px;top:851px;width:171px;height:145px;border:2px solid #f4f4f4;box-sizing:border-box;background:linear-gradient(#dfe3df 50%,#e6e6e6 50%);"></div>
<div class="t" style="left:2232.1px;top:1002.2px;font-size:16.5px;line-height:16.5px;color:#fff;font-family:"Liberation Serif",serif;transform:scaleX(1.0600);">90</div>
<div class="b" style="left:2354.0px;top:851px;width:171px;height:145px;border:2px solid #f4f4f4;box-sizing:border-box;background:linear-gradient(#f7fff9 50%,#ffffff 50%);"></div>
<div class="t" style="left:2426.4px;top:1002.2px;font-size:16.5px;line-height:16.5px;color:#fff;font-family:"Liberation Serif",serif;transform:scaleX(1.0600);">100</div>
<div class="t" style="left:323.7px;top:874.5px;font-size:17.5px;line-height:17px;color:#fff;transform:rotate(-90deg);transform-origin:50% 50%;width:48.6px;text-align:center;">Actual</div>
<div class="t" style="left:323.7px;top:956.0px;font-size:17.5px;line-height:17px;color:#fff;transform:rotate(-90deg);transform-origin:50% 50%;width:48.6px;text-align:center;">Target</div>
<div class="t" style="left:231.0px;top:1086.9px;font-size:42px;line-height:42px;color:#efefef;transform:scaleX(1.0011);">Current Reading</div>
<div class="t" style="left:231.0px;top:1153.7px;font-size:34px;line-height:34px;color:#efefef;transform:scaleX(1.0266);">x: 0.3098</div>
<div class="t" style="left:442.0px;top:1153.7px;font-size:34px;line-height:34px;color:#efefef;transform:scaleX(1.0417);">y: 0.3344</div>
<div class="t" style="left:231.0px;top:1201.2px;font-size:34px;line-height:34px;color:#efefef;transform:scaleX(1.0481);">u&#x27;: 0.1939</div>
<div class="t" style="left:442.0px;top:1201.2px;font-size:34px;line-height:34px;color:#efefef;transform:scaleX(1.0453);">v&#x27;: 0.4707</div>
<div class="t" style="left:231.0px;top:1249.6px;font-size:34px;line-height:34px;color:#efefef;transform:scaleX(1.0729);">cd/m²: 975.1672</div>
<div class="t" style="left:231.0px;top:1298.2px;font-size:34px;line-height:34px;color:#efefef;transform:scaleX(1.0041);">ΔE 2000: 5.67</div>
<div class="t" style="left:817.0px;top:1056.5px;font-size:21.8px;line-height:21.8px;color:#dcdcdc;transform:scaleX(0.8927);">CIE 1931 xy</div>
<svg class="b" style="left:700px;top:1075px" width="380" height="260" viewBox="700 1075 380 260">
<defs><clipPath id="cieclip"><rect x="716" y="1082" width="356" height="235"/></clipPath><filter id="cieblur" x="-10%" y="-10%" width="120%" height="120%"><feGaussianBlur stdDeviation="5"/></filter></defs>
<g clip-path="url(#cieclip)"><g filter="url(#cieblur)">
<rect x="696" y="1062" width="10.5" height="10.5" fill="#7bffc7"/>
<rect x="706" y="1062" width="10.5" height="10.5" fill="#7fffc7"/>
<rect x="716" y="1062" width="10.5" height="10.5" fill="#83ffc7"/>
<rect x="726" y="1062" width="10.5" height="10.5" fill="#86ffc7"/>
<rect x="736" y="1062" width="10.5" height="10.5" fill="#8affc6"/>
<rect x="746" y="1062" width="10.5" height="10.5" fill="#8effc6"/>
<rect x="756" y="1062" width="10.5" height="10.5" fill="#92ffc6"/>
<rect x="766" y="1062" width="10.5" height="10.5" fill="#96ffc6"/>
<rect x="776" y="1062" width="10.5" height="10.5" fill="#9affc6"/>
<rect x="786" y="1062" width="10.5" height="10.5" fill="#9effc5"/>
<rect x="796" y="1062" width="10.5" height="10.5" fill="#a2ffc5"/>
<rect x="806" y="1062" width="10.5" height="10.5" fill="#a5ffc5"/>
<rect x="816" y="1062" width="10.5" height="10.5" fill="#aaffc5"/>
<rect x="826" y="1062" width="10.5" height="10.5" fill="#aeffc5"/>
<rect x="836" y="1062" width="10.5" height="10.5" fill="#b2ffc4"/>
<rect x="846" y="1062" width="10.5" height="10.5" fill="#b6ffc4"/>
<rect x="856" y="1062" width="10.5" height="10.5" fill="#baffc4"/>
<rect x="866" y="1062" width="10.5" height="10.5" fill="#beffc4"/>
<rect x="876" y="1062" width="10.5" height="10.5" fill="#c2ffc4"/>
<rect x="886" y="1062" width="10.5" height="10.5" fill="#c6ffc3"/>
<rect x="896" y="1062" width="10.5" height="10.5" fill="#cbffc3"/>
<rect x="906" y="1062" width="10.5" height="10.5" fill="#cfffc3"/>
<rect x="916" y="1062" width="10.5" height="10.5" fill="#d3ffc3"/>
<rect x="926" y="1062" width="10.5" height="10.5" fill="#d8ffc3"/>
<rect x="936" y="1062" width="10.5" height="10.5" fill="#dcffc2"/>
<rect x="946" y="1062" width="10.5" height="10.5" fill="#e0ffc2"/>
<rect x="956" y="1062" width="10.5" height="10.5" fill="#e5ffc2"/>
<rect x="966" y="1062" width="10.5" height="10.5" fill="#e9ffc2"/>
<rect x="976" y="1062" width="10.5" height="10.5" fill="#eeffc1"/>
<rect x="986" y="1062" width="10.5" height="10.5" fill="#f2ffc1"/>
<rect x="996" y="1062" width="10.5" height="10.5" fill="#f7ffc1"/>
<rect x="1006" y="1062" width="10.5" height="10.5" fill="#fcffc1"/>
<rect x="1016" y="1062" width="10.5" height="10.5" fill="#fffec0"/>
<rect x="1026" y="1062" width="10.5" height="10.5" fill="#fff9bc"/>
<rect x="1036" y="1062" width="10.5" height="10.5" fill="#fff5b8"/>
<rect x="1046" y="1062" width="10.5" height="10.5" fill="#fff0b5"/>
<rect x="1056" y="1062" width="10.5" height="10.5" fill="#ffecb1"/>
<rect x="1066" y="1062" width="10.5" height="10.5" fill="#ffe8ae"/>
<rect x="1076" y="1062" width="10.5" height="10.5" fill="#ffe4ab"/>
<rect x="1086" y="1062" width="10.5" height="10.5" fill="#ffe0a8"/>
<rect x="696" y="1072" width="10.5" height="10.5" fill="#7effcb"/>
<rect x="706" y="1072" width="10.5" height="10.5" fill="#82ffcb"/>
<rect x="716" y="1072" width="10.5" height="10.5" fill="#85ffca"/>
<rect x="726" y="1072" width="10.5" height="10.5" fill="#89ffca"/>
<rect x="736" y="1072" width="10.5" height="10.5" fill="#8dffca"/>
<rect x="746" y="1072" width="10.5" height="10.5" fill="#91ffca"/>
<rect x="756" y="1072" width="10.5" height="10.5" fill="#95ffca"/>
<rect x="766" y="1072" width="10.5" height="10.5" fill="#99ffca"/>
<rect x="776" y="1072" width="10.5" height="10.5" fill="#9dffc9"/>
<rect x="786" y="1072" width="10.5" height="10.5" fill="#a1ffc9"/>
<rect x="796" y="1072" width="10.5" height="10.5" fill="#a5ffc9"/>
<rect x="806" y="1072" width="10.5" height="10.5" fill="#a9ffc9"/>
<rect x="816" y="1072" width="10.5" height="10.5" fill="#adffc9"/>
<rect x="826" y="1072" width="10.5" height="10.5" fill="#b1ffc8"/>
<rect x="836" y="1072" width="10.5" height="10.5" fill="#b5ffc8"/>
<rect x="846" y="1072" width="10.5" height="10.5" fill="#b9ffc8"/>
<rect x="856" y="1072" width="10.5" height="10.5" fill="#bdffc8"/>
<rect x="866" y="1072" width="10.5" height="10.5" fill="#c1ffc8"/>
<rect x="876" y="1072" width="10.5" height="10.5" fill="#c6ffc7"/>
<rect x="886" y="1072" width="10.5" height="10.5" fill="#caffc7"/>
<rect x="896" y="1072" width="10.5" height="10.5" fill="#ceffc7"/>
<rect x="906" y="1072" width="10.5" height="10.5" fill="#d3ffc7"/>
<rect x="916" y="1072" width="10.5" height="10.5" fill="#d7ffc7"/>
<rect x="926" y="1072" width="10.5" height="10.5" fill="#dbffc6"/>
<rect x="936" y="1072" width="10.5" height="10.5" fill="#e0ffc6"/>
<rect x="946" y="1072" width="10.5" height="10.5" fill="#e4ffc6"/>
<rect x="956" y="1072" width="10.5" height="10.5" fill="#e9ffc6"/>
<rect x="966" y="1072" width="10.5" height="10.5" fill="#edffc6"/>
<rect x="976" y="1072" width="10.5" height="10.5" fill="#f2ffc5"/>
<rect x="986" y="1072" width="10.5" height="10.5" fill="#f7ffc5"/>
<rect x="996" y="1072" width="10.5" height="10.5" fill="#fbffc5"/>
<rect x="1006" y="1072" width="10.5" height="10.5" fill="#fffec4"/>
<rect x="1016" y="1072" width="10.5" height="10.5" fill="#fff9c0"/>
<rect x="1026" y="1072" width="10.5" height="10.5" fill="#fff5bd"/>
<rect x="1036" y="1072" width="10.5" height="10.5" fill="#fff1b9"/>
<rect x="1046" y="1072" width="10.5" height="10.5" fill="#ffecb6"/>
<rect x="1056" y="1072" width="10.5" height="10.5" fill="#ffe8b2"/>
<rect x="1066" y="1072" width="10.5" height="10.5" fill="#ffe4af"/>
<rect x="1076" y="1072" width="10.5" height="10.5" fill="#ffe0ac"/>
<rect x="1086" y="1072" width="10.5" height="10.5" fill="#ffdda9"/>
<rect x="696" y="1082" width="10.5" height="10.5" fill="#80ffcf"/>
<rect x="706" y="1082" width="10.5" height="10.5" fill="#84ffce"/>
<rect x="716" y="1082" width="10.5" height="10.5" fill="#88ffce"/>
<rect x="726" y="1082" width="10.5" height="10.5" fill="#8cffce"/>
<rect x="736" y="1082" width="10.5" height="10.5" fill="#90ffce"/>
<rect x="746" y="1082" width="10.5" height="10.5" fill="#94ffce"/>
<rect x="756" y="1082" width="10.5" height="10.5" fill="#98ffce"/>
<rect x="766" y="1082" width="10.5" height="10.5" fill="#9cffcd"/>
<rect x="776" y="1082" width="10.5" height="10.5" fill="#a0ffcd"/>
<rect x="786" y="1082" width="10.5" height="10.5" fill="#a4ffcd"/>
<rect x="796" y="1082" width="10.5" height="10.5" fill="#a8ffcd"/>
<rect x="806" y="1082" width="10.5" height="10.5" fill="#acffcd"/>
<rect x="816" y="1082" width="10.5" height="10.5" fill="#b0ffcc"/>
<rect x="826" y="1082" width="10.5" height="10.5" fill="#b4ffcc"/>
<rect x="836" y="1082" width="10.5" height="10.5" fill="#b8ffcc"/>
<rect x="846" y="1082" width="10.5" height="10.5" fill="#bcffcc"/>
<rect x="856" y="1082" width="10.5" height="10.5" fill="#c1ffcc"/>
<rect x="866" y="1082" width="10.5" height="10.5" fill="#c5ffcc"/>
<rect x="876" y="1082" width="10.5" height="10.5" fill="#c9ffcb"/>
<rect x="886" y="1082" width="10.5" height="10.5" fill="#ceffcb"/>
<rect x="896" y="1082" width="10.5" height="10.5" fill="#d2ffcb"/>
<rect x="906" y="1082" width="10.5" height="10.5" fill="#d6ffcb"/>
<rect x="916" y="1082" width="10.5" height="10.5" fill="#dbffcb"/>
<rect x="926" y="1082" width="10.5" height="10.5" fill="#dfffca"/>
<rect x="936" y="1082" width="10.5" height="10.5" fill="#e4ffca"/>
<rect x="946" y="1082" width="10.5" height="10.5" fill="#e8ffca"/>
<rect x="956" y="1082" width="10.5" height="10.5" fill="#edffca"/>
<rect x="966" y="1082" width="10.5" height="10.5" fill="#f2ffca"/>
<rect x="976" y="1082" width="10.5" height="10.5" fill="#f6ffc9"/>
<rect x="986" y="1082" width="10.5" height="10.5" fill="#fbffc9"/>
<rect x="996" y="1082" width="10.5" height="10.5" fill="#fffec9"/>
<rect x="1006" y="1082" width="10.5" height="10.5" fill="#fffac5"/>
<rect x="1016" y="1082" width="10.5" height="10.5" fill="#fff5c1"/>
<rect x="1026" y="1082" width="10.5" height="10.5" fill="#fff1bd"/>
<rect x="1036" y="1082" width="10.5" height="10.5" fill="#ffedba"/>
<rect x="1046" y="1082" width="10.5" height="10.5" fill="#ffe8b6"/>
<rect x="1056" y="1082" width="10.5" height="10.5" fill="#ffe4b3"/>
<rect x="1066" y="1082" width="10.5" height="10.5" fill="#ffe0b0"/>
<rect x="1076" y="1082" width="10.5" height="10.5" fill="#ffddac"/>
<rect x="1086" y="1082" width="10.5" height="10.5" fill="#ffd9a9"/>
<rect x="696" y="1092" width="10.5" height="10.5" fill="#83ffd2"/>
<rect x="706" y="1092" width="10.5" height="10.5" fill="#87ffd2"/>
<rect x="716" y="1092" width="10.5" height="10.5" fill="#8bffd2"/>
<rect x="726" y="1092" width="10.5" height="10.5" fill="#8fffd2"/>
<rect x="736" y="1092" width="10.5" height="10.5" fill="#93ffd2"/>
<rect x="746" y="1092" width="10.5" height="10.5" fill="#97ffd2"/>
<rect x="756" y="1092" width="10.5" height="10.5" fill="#9bffd1"/>
<rect x="766" y="1092" width="10.5" height="10.5" fill="#9fffd1"/>
<rect x="776" y="1092" width="10.5" height="10.5" fill="#a3ffd1"/>
<rect x="786" y="1092" width="10.5" height="10.5" fill="#a7ffd1"/>
<rect x="796" y="1092" width="10.5" height="10.5" fill="#abffd1"/>
<rect x="806" y="1092" width="10.5" height="10.5" fill="#afffd1"/>
<rect x="816" y="1092" width="10.5" height="10.5" fill="#b3ffd0"/>
<rect x="826" y="1092" width="10.5" height="10.5" fill="#b7ffd0"/>
<rect x="836" y="1092" width="10.5" height="10.5" fill="#bcffd0"/>
<rect x="846" y="1092" width="10.5" height="10.5" fill="#c0ffd0"/>
<rect x="856" y="1092" width="10.5" height="10.5" fill="#c4ffd0"/>
<rect x="866" y="1092" width="10.5" height="10.5" fill="#c9ffd0"/>
<rect x="876" y="1092" width="10.5" height="10.5" fill="#cdffcf"/>
<rect x="886" y="1092" width="10.5" height="10.5" fill="#d1ffcf"/>
<rect x="896" y="1092" width="10.5" height="10.5" fill="#d6ffcf"/>
<rect x="906" y="1092" width="10.5" height="10.5" fill="#daffcf"/>
<rect x="916" y="1092" width="10.5" height="10.5" fill="#dfffcf"/>
<rect x="926" y="1092" width="10.5" height="10.5" fill="#e3ffce"/>
<rect x="936" y="1092" width="10.5" height="10.5" fill="#e8ffce"/>
<rect x="946" y="1092" width="10.5" height="10.5" fill="#ecffce"/>
<rect x="956" y="1092" width="10.5" height="10.5" fill="#f1ffce"/>
<rect x="966" y="1092" width="10.5" height="10.5" fill="#f6ffce"/>
<rect x="976" y="1092" width="10.5" height="10.5" fill="#faffce"/>
<rect x="986" y="1092" width="10.5" height="10.5" fill="#ffffcd"/>
<rect x="996" y="1092" width="10.5" height="10.5" fill="#fffac9"/>
<rect x="1006" y="1092" width="10.5" height="10.5" fill="#fff6c5"/>
<rect x="1016" y="1092" width="10.5" height="10.5" fill="#fff1c2"/>
<rect x="1026" y="1092" width="10.5" height="10.5" fill="#ffedbe"/>
<rect x="1036" y="1092" width="10.5" height="10.5" fill="#ffe9ba"/>
<rect x="1046" y="1092" width="10.5" height="10.5" fill="#ffe5b7"/>
<rect x="1056" y="1092" width="10.5" height="10.5" fill="#ffe1b4"/>
<rect x="1066" y="1092" width="10.5" height="10.5" fill="#ffddb0"/>
<rect x="1076" y="1092" width="10.5" height="10.5" fill="#ffd9ad"/>
<rect x="1086" y="1092" width="10.5" height="10.5" fill="#ffd5aa"/>
<rect x="696" y="1102" width="10.5" height="10.5" fill="#86ffd6"/>
<rect x="706" y="1102" width="10.5" height="10.5" fill="#8affd6"/>
<rect x="716" y="1102" width="10.5" height="10.5" fill="#8effd6"/>
<rect x="726" y="1102" width="10.5" height="10.5" fill="#92ffd6"/>
<rect x="736" y="1102" width="10.5" height="10.5" fill="#96ffd6"/>
<rect x="746" y="1102" width="10.5" height="10.5" fill="#9affd5"/>
<rect x="756" y="1102" width="10.5" height="10.5" fill="#9effd5"/>
<rect x="766" y="1102" width="10.5" height="10.5" fill="#a2ffd5"/>
<rect x="776" y="1102" width="10.5" height="10.5" fill="#a6ffd5"/>
<rect x="786" y="1102" width="10.5" height="10.5" fill="#aaffd5"/>
<rect x="796" y="1102" width="10.5" height="10.5" fill="#aeffd5"/>
<rect x="806" y="1102" width="10.5" height="10.5" fill="#b2ffd5"/>
<rect x="816" y="1102" width="10.5" height="10.5" fill="#b7ffd4"/>
<rect x="826" y="1102" width="10.5" height="10.5" fill="#bbffd4"/>
<rect x="836" y="1102" width="10.5" height="10.5" fill="#bfffd4"/>
<rect x="846" y="1102" width="10.5" height="10.5" fill="#c4ffd4"/>
<rect x="856" y="1102" width="10.5" height="10.5" fill="#c8ffd4"/>
<rect x="866" y="1102" width="10.5" height="10.5" fill="#ccffd4"/>
<rect x="876" y="1102" width="10.5" height="10.5" fill="#d1ffd3"/>
<rect x="886" y="1102" width="10.5" height="10.5" fill="#d5ffd3"/>
<rect x="896" y="1102" width="10.5" height="10.5" fill="#daffd3"/>
<rect x="906" y="1102" width="10.5" height="10.5" fill="#deffd3"/>
<rect x="916" y="1102" width="10.5" height="10.5" fill="#e3ffd3"/>
<rect x="926" y="1102" width="10.5" height="10.5" fill="#e7ffd3"/>
<rect x="936" y="1102" width="10.5" height="10.5" fill="#ecffd2"/>
<rect x="946" y="1102" width="10.5" height="10.5" fill="#f1ffd2"/>
<rect x="956" y="1102" width="10.5" height="10.5" fill="#f5ffd2"/>
<rect x="966" y="1102" width="10.5" height="10.5" fill="#faffd2"/>
<rect x="976" y="1102" width="10.5" height="10.5" fill="#ffffd2"/>
<rect x="986" y="1102" width="10.5" height="10.5" fill="#ffface"/>
<rect x="996" y="1102" width="10.5" height="10.5" fill="#fff6ca"/>
<rect x="1006" y="1102" width="10.5" height="10.5" fill="#fff1c6"/>
<rect x="1016" y="1102" width="10.5" height="10.5" fill="#ffedc2"/>
<rect x="1026" y="1102" width="10.5" height="10.5" fill="#ffe9bf"/>
<rect x="1036" y="1102" width="10.5" height="10.5" fill="#ffe5bb"/>
<rect x="1046" y="1102" width="10.5" height="10.5" fill="#ffe1b8"/>
<rect x="1056" y="1102" width="10.5" height="10.5" fill="#ffddb4"/>
<rect x="1066" y="1102" width="10.5" height="10.5" fill="#ffd9b1"/>
<rect x="1076" y="1102" width="10.5" height="10.5" fill="#ffd5ae"/>
<rect x="1086" y="1102" width="10.5" height="10.5" fill="#ffd2ab"/>
<rect x="696" y="1112" width="10.5" height="10.5" fill="#89ffda"/>
<rect x="706" y="1112" width="10.5" height="10.5" fill="#8dffda"/>
<rect x="716" y="1112" width="10.5" height="10.5" fill="#91ffda"/>
<rect x="726" y="1112" width="10.5" height="10.5" fill="#95ffda"/>
<rect x="736" y="1112" width="10.5" height="10.5" fill="#99ffda"/>
<rect x="746" y="1112" width="10.5" height="10.5" fill="#9dffd9"/>
<rect x="756" y="1112" width="10.5" height="10.5" fill="#a1ffd9"/>
<rect x="766" y="1112" width="10.5" height="10.5" fill="#a5ffd9"/>
<rect x="776" y="1112" width="10.5" height="10.5" fill="#a9ffd9"/>
<rect x="786" y="1112" width="10.5" height="10.5" fill="#adffd9"/>
<rect x="796" y="1112" width="10.5" height="10.5" fill="#b2ffd9"/>
<rect x="806" y="1112" width="10.5" height="10.5" fill="#b6ffd9"/>
<rect x="816" y="1112" width="10.5" height="10.5" fill="#baffd8"/>
<rect x="826" y="1112" width="10.5" height="10.5" fill="#beffd8"/>
<rect x="836" y="1112" width="10.5" height="10.5" fill="#c3ffd8"/>
<rect x="846" y="1112" width="10.5" height="10.5" fill="#c7ffd8"/>
<rect x="856" y="1112" width="10.5" height="10.5" fill="#ccffd8"/>
<rect x="866" y="1112" width="10.5" height="10.5" fill="#d0ffd8"/>
<rect x="876" y="1112" width="10.5" height="10.5" fill="#d4ffd8"/>
<rect x="886" y="1112" width="10.5" height="10.5" fill="#d9ffd8"/>
<rect x="896" y="1112" width="10.5" height="10.5" fill="#deffd7"/>
<rect x="906" y="1112" width="10.5" height="10.5" fill="#e2ffd7"/>
<rect x="916" y="1112" width="10.5" height="10.5" fill="#e7ffd7"/>
<rect x="926" y="1112" width="10.5" height="10.5" fill="#ebffd7"/>
<rect x="936" y="1112" width="10.5" height="10.5" fill="#f0ffd7"/>
<rect x="946" y="1112" width="10.5" height="10.5" fill="#f5ffd7"/>
<rect x="956" y="1112" width="10.5" height="10.5" fill="#faffd6"/>
<rect x="966" y="1112" width="10.5" height="10.5" fill="#feffd6"/>
<rect x="976" y="1112" width="10.5" height="10.5" fill="#fffbd3"/>
<rect x="986" y="1112" width="10.5" height="10.5" fill="#fff6cf"/>
<rect x="996" y="1112" width="10.5" height="10.5" fill="#fff2cb"/>
<rect x="1006" y="1112" width="10.5" height="10.5" fill="#ffedc7"/>
<rect x="1016" y="1112" width="10.5" height="10.5" fill="#ffe9c3"/>
<rect x="1026" y="1112" width="10.5" height="10.5" fill="#ffe5bf"/>
<rect x="1036" y="1112" width="10.5" height="10.5" fill="#ffe1bc"/>
<rect x="1046" y="1112" width="10.5" height="10.5" fill="#ffddb8"/>
<rect x="1056" y="1112" width="10.5" height="10.5" fill="#ffd9b5"/>
<rect x="1066" y="1112" width="10.5" height="10.5" fill="#ffd5b2"/>
<rect x="1076" y="1112" width="10.5" height="10.5" fill="#ffd2af"/>
<rect x="1086" y="1112" width="10.5" height="10.5" fill="#ffceac"/>
<rect x="696" y="1122" width="10.5" height="10.5" fill="#8cffde"/>
<rect x="706" y="1122" width="10.5" height="10.5" fill="#90ffde"/>
<rect x="716" y="1122" width="10.5" height="10.5" fill="#94ffde"/>
<rect x="726" y="1122" width="10.5" height="10.5" fill="#98ffde"/>
<rect x="736" y="1122" width="10.5" height="10.5" fill="#9cffde"/>
<rect x="746" y="1122" width="10.5" height="10.5" fill="#a0ffde"/>
<rect x="756" y="1122" width="10.5" height="10.5" fill="#a4ffdd"/>
<rect x="766" y="1122" width="10.5" height="10.5" fill="#a8ffdd"/>
<rect x="776" y="1122" width="10.5" height="10.5" fill="#acffdd"/>
<rect x="786" y="1122" width="10.5" height="10.5" fill="#b1ffdd"/>
<rect x="796" y="1122" width="10.5" height="10.5" fill="#b5ffdd"/>
<rect x="806" y="1122" width="10.5" height="10.5" fill="#b9ffdd"/>
<rect x="816" y="1122" width="10.5" height="10.5" fill="#beffdd"/>
<rect x="826" y="1122" width="10.5" height="10.5" fill="#c2ffdd"/>
<rect x="836" y="1122" width="10.5" height="10.5" fill="#c6ffdc"/>
<rect x="846" y="1122" width="10.5" height="10.5" fill="#cbffdc"/>
<rect x="856" y="1122" width="10.5" height="10.5" fill="#cfffdc"/>
<rect x="866" y="1122" width="10.5" height="10.5" fill="#d4ffdc"/>
<rect x="876" y="1122" width="10.5" height="10.5" fill="#d8ffdc"/>
<rect x="886" y="1122" width="10.5" height="10.5" fill="#ddffdc"/>
<rect x="896" y="1122" width="10.5" height="10.5" fill="#e2ffdc"/>
<rect x="906" y="1122" width="10.5" height="10.5" fill="#e6ffdc"/>
<rect x="916" y="1122" width="10.5" height="10.5" fill="#ebffdb"/>
<rect x="926" y="1122" width="10.5" height="10.5" fill="#f0ffdb"/>
<rect x="936" y="1122" width="10.5" height="10.5" fill="#f4ffdb"/>
<rect x="946" y="1122" width="10.5" height="10.5" fill="#f9ffdb"/>
<rect x="956" y="1122" width="10.5" height="10.5" fill="#feffdb"/>
<rect x="966" y="1122" width="10.5" height="10.5" fill="#fffbd7"/>
<rect x="976" y="1122" width="10.5" height="10.5" fill="#fff6d3"/>
<rect x="986" y="1122" width="10.5" height="10.5" fill="#fff2cf"/>
<rect x="996" y="1122" width="10.5" height="10.5" fill="#ffedcb"/>
<rect x="1006" y="1122" width="10.5" height="10.5" fill="#ffe9c7"/>
<rect x="1016" y="1122" width="10.5" height="10.5" fill="#ffe5c4"/>
<rect x="1026" y="1122" width="10.5" height="10.5" fill="#ffe1c0"/>
<rect x="1036" y="1122" width="10.5" height="10.5" fill="#ffddbd"/>
<rect x="1046" y="1122" width="10.5" height="10.5" fill="#ffd9b9"/>
<rect x="1056" y="1122" width="10.5" height="10.5" fill="#ffd5b6"/>
<rect x="1066" y="1122" width="10.5" height="10.5" fill="#ffd2b3"/>
<rect x="1076" y="1122" width="10.5" height="10.5" fill="#ffceaf"/>
<rect x="1086" y="1122" width="10.5" height="10.5" fill="#ffcbac"/>
<rect x="696" y="1132" width="10.5" height="10.5" fill="#8fffe2"/>
<rect x="706" y="1132" width="10.5" height="10.5" fill="#93ffe2"/>
<rect x="716" y="1132" width="10.5" height="10.5" fill="#97ffe2"/>
<rect x="726" y="1132" width="10.5" height="10.5" fill="#9bffe2"/>
<rect x="736" y="1132" width="10.5" height="10.5" fill="#9fffe2"/>
<rect x="746" y="1132" width="10.5" height="10.5" fill="#a3ffe2"/>
<rect x="756" y="1132" width="10.5" height="10.5" fill="#a7ffe2"/>
<rect x="766" y="1132" width="10.5" height="10.5" fill="#acffe1"/>
<rect x="776" y="1132" width="10.5" height="10.5" fill="#b0ffe1"/>
<rect x="786" y="1132" width="10.5" height="10.5" fill="#b4ffe1"/>
<rect x="796" y="1132" width="10.5" height="10.5" fill="#b8ffe1"/>
<rect x="806" y="1132" width="10.5" height="10.5" fill="#bdffe1"/>
<rect x="816" y="1132" width="10.5" height="10.5" fill="#c1ffe1"/>
<rect x="826" y="1132" width="10.5" height="10.5" fill="#c6ffe1"/>
<rect x="836" y="1132" width="10.5" height="10.5" fill="#caffe1"/>
<rect x="846" y="1132" width="10.5" height="10.5" fill="#cfffe1"/>
<rect x="856" y="1132" width="10.5" height="10.5" fill="#d3ffe1"/>
<rect x="866" y="1132" width="10.5" height="10.5" fill="#d8ffe0"/>
<rect x="876" y="1132" width="10.5" height="10.5" fill="#dcffe0"/>
<rect x="886" y="1132" width="10.5" height="10.5" fill="#e1ffe0"/>
<rect x="896" y="1132" width="10.5" height="10.5" fill="#e6ffe0"/>
<rect x="906" y="1132" width="10.5" height="10.5" fill="#eaffe0"/>
<rect x="916" y="1132" width="10.5" height="10.5" fill="#efffe0"/>
<rect x="926" y="1132" width="10.5" height="10.5" fill="#f4ffe0"/>
<rect x="936" y="1132" width="10.5" height="10.5" fill="#f9ffe0"/>
<rect x="946" y="1132" width="10.5" height="10.5" fill="#feffdf"/>
<rect x="956" y="1132" width="10.5" height="10.5" fill="#fffbdc"/>
<rect x="966" y="1132" width="10.5" height="10.5" fill="#fff7d8"/>
<rect x="976" y="1132" width="10.5" height="10.5" fill="#fff2d4"/>
<rect x="986" y="1132" width="10.5" height="10.5" fill="#ffeed0"/>
<rect x="996" y="1132" width="10.5" height="10.5" fill="#ffe9cc"/>
<rect x="1006" y="1132" width="10.5" height="10.5" fill="#ffe5c8"/>
<rect x="1016" y="1132" width="10.5" height="10.5" fill="#ffe1c4"/>
<rect x="1026" y="1132" width="10.5" height="10.5" fill="#ffddc1"/>
<rect x="1036" y="1132" width="10.5" height="10.5" fill="#ffd9bd"/>
<rect x="1046" y="1132" width="10.5" height="10.5" fill="#ffd5ba"/>
<rect x="1056" y="1132" width="10.5" height="10.5" fill="#ffd2b7"/>
<rect x="1066" y="1132" width="10.5" height="10.5" fill="#ffceb3"/>
<rect x="1076" y="1132" width="10.5" height="10.5" fill="#ffcbb0"/>
<rect x="1086" y="1132" width="10.5" height="10.5" fill="#ffc7ad"/>
<rect x="696" y="1142" width="10.5" height="10.5" fill="#92ffe6"/>
<rect x="706" y="1142" width="10.5" height="10.5" fill="#96ffe6"/>
<rect x="716" y="1142" width="10.5" height="10.5" fill="#9affe6"/>
<rect x="726" y="1142" width="10.5" height="10.5" fill="#9effe6"/>
<rect x="736" y="1142" width="10.5" height="10.5" fill="#a2ffe6"/>
<rect x="746" y="1142" width="10.5" height="10.5" fill="#a6ffe6"/>
<rect x="756" y="1142" width="10.5" height="10.5" fill="#abffe6"/>
<rect x="766" y="1142" width="10.5" height="10.5" fill="#afffe6"/>
<rect x="776" y="1142" width="10.5" height="10.5" fill="#b3ffe6"/>
<rect x="786" y="1142" width="10.5" height="10.5" fill="#b8ffe6"/>
<rect x="796" y="1142" width="10.5" height="10.5" fill="#bcffe5"/>
<rect x="806" y="1142" width="10.5" height="10.5" fill="#c0ffe5"/>
<rect x="816" y="1142" width="10.5" height="10.5" fill="#c5ffe5"/>
<rect x="826" y="1142" width="10.5" height="10.5" fill="#c9ffe5"/>
<rect x="836" y="1142" width="10.5" height="10.5" fill="#ceffe5"/>
<rect x="846" y="1142" width="10.5" height="10.5" fill="#d3ffe5"/>
<rect x="856" y="1142" width="10.5" height="10.5" fill="#d7ffe5"/>
<rect x="866" y="1142" width="10.5" height="10.5" fill="#dcffe5"/>
<rect x="876" y="1142" width="10.5" height="10.5" fill="#e0ffe5"/>
<rect x="886" y="1142" width="10.5" height="10.5" fill="#e5ffe5"/>
<rect x="896" y="1142" width="10.5" height="10.5" fill="#eaffe5"/>
<rect x="906" y="1142" width="10.5" height="10.5" fill="#efffe4"/>
<rect x="916" y="1142" width="10.5" height="10.5" fill="#f4ffe4"/>
<rect x="926" y="1142" width="10.5" height="10.5" fill="#f8ffe4"/>
<rect x="936" y="1142" width="10.5" height="10.5" fill="#fdffe4"/>
<rect x="946" y="1142" width="10.5" height="10.5" fill="#fffce1"/>
<rect x="956" y="1142" width="10.5" height="10.5" fill="#fff7dd"/>
<rect x="966" y="1142" width="10.5" height="10.5" fill="#fff2d9"/>
<rect x="976" y="1142" width="10.5" height="10.5" fill="#ffeed4"/>
<rect x="986" y="1142" width="10.5" height="10.5" fill="#ffe9d0"/>
<rect x="996" y="1142" width="10.5" height="10.5" fill="#ffe5cc"/>
<rect x="1006" y="1142" width="10.5" height="10.5" fill="#ffe1c9"/>
<rect x="1016" y="1142" width="10.5" height="10.5" fill="#ffddc5"/>
<rect x="1026" y="1142" width="10.5" height="10.5" fill="#ffd9c1"/>
<rect x="1036" y="1142" width="10.5" height="10.5" fill="#ffd5be"/>
<rect x="1046" y="1142" width="10.5" height="10.5" fill="#ffd2bb"/>
<rect x="1056" y="1142" width="10.5" height="10.5" fill="#ffceb7"/>
<rect x="1066" y="1142" width="10.5" height="10.5" fill="#ffcab4"/>
<rect x="1076" y="1142" width="10.5" height="10.5" fill="#ffc7b1"/>
<rect x="1086" y="1142" width="10.5" height="10.5" fill="#ffc4ae"/>
<rect x="696" y="1152" width="10.5" height="10.5" fill="#95ffeb"/>
<rect x="706" y="1152" width="10.5" height="10.5" fill="#99ffeb"/>
<rect x="716" y="1152" width="10.5" height="10.5" fill="#9dffeb"/>
<rect x="726" y="1152" width="10.5" height="10.5" fill="#a1ffea"/>
<rect x="736" y="1152" width="10.5" height="10.5" fill="#a5ffea"/>
<rect x="746" y="1152" width="10.5" height="10.5" fill="#aaffea"/>
<rect x="756" y="1152" width="10.5" height="10.5" fill="#aeffea"/>
<rect x="766" y="1152" width="10.5" height="10.5" fill="#b2ffea"/>
<rect x="776" y="1152" width="10.5" height="10.5" fill="#b7ffea"/>
<rect x="786" y="1152" width="10.5" height="10.5" fill="#bbffea"/>
<rect x="796" y="1152" width="10.5" height="10.5" fill="#c0ffea"/>
<rect x="806" y="1152" width="10.5" height="10.5" fill="#c4ffea"/>
<rect x="816" y="1152" width="10.5" height="10.5" fill="#c9ffea"/>
<rect x="826" y="1152" width="10.5" height="10.5" fill="#cdffea"/>
<rect x="836" y="1152" width="10.5" height="10.5" fill="#d2ffea"/>
<rect x="846" y="1152" width="10.5" height="10.5" fill="#d6ffea"/>
<rect x="856" y="1152" width="10.5" height="10.5" fill="#dbffe9"/>
<rect x="866" y="1152" width="10.5" height="10.5" fill="#e0ffe9"/>
<rect x="876" y="1152" width="10.5" height="10.5" fill="#e5ffe9"/>
<rect x="886" y="1152" width="10.5" height="10.5" fill="#e9ffe9"/>
<rect x="896" y="1152" width="10.5" height="10.5" fill="#eeffe9"/>
<rect x="906" y="1152" width="10.5" height="10.5" fill="#f3ffe9"/>
<rect x="916" y="1152" width="10.5" height="10.5" fill="#f8ffe9"/>
<rect x="926" y="1152" width="10.5" height="10.5" fill="#fdffe9"/>
<rect x="936" y="1152" width="10.5" height="10.5" fill="#fffce6"/>
<rect x="946" y="1152" width="10.5" height="10.5" fill="#fff7e2"/>
<rect x="956" y="1152" width="10.5" height="10.5" fill="#fff3dd"/>
<rect x="966" y="1152" width="10.5" height="10.5" fill="#ffeed9"/>
<rect x="976" y="1152" width="10.5" height="10.5" fill="#ffead5"/>
<rect x="986" y="1152" width="10.5" height="10.5" fill="#ffe5d1"/>
<rect x="996" y="1152" width="10.5" height="10.5" fill="#ffe1cd"/>
<rect x="1006" y="1152" width="10.5" height="10.5" fill="#ffddc9"/>
<rect x="1016" y="1152" width="10.5" height="10.5" fill="#ffd9c6"/>
<rect x="1026" y="1152" width="10.5" height="10.5" fill="#ffd5c2"/>
<rect x="1036" y="1152" width="10.5" height="10.5" fill="#ffd2bf"/>
<rect x="1046" y="1152" width="10.5" height="10.5" fill="#ffcebb"/>
<rect x="1056" y="1152" width="10.5" height="10.5" fill="#ffcab8"/>
<rect x="1066" y="1152" width="10.5" height="10.5" fill="#ffc7b5"/>
<rect x="1076" y="1152" width="10.5" height="10.5" fill="#ffc4b2"/>
<rect x="1086" y="1152" width="10.5" height="10.5" fill="#ffc0af"/>
<rect x="696" y="1162" width="10.5" height="10.5" fill="#98ffef"/>
<rect x="706" y="1162" width="10.5" height="10.5" fill="#9cffef"/>
<rect x="716" y="1162" width="10.5" height="10.5" fill="#a0ffef"/>
<rect x="726" y="1162" width="10.5" height="10.5" fill="#a4ffef"/>
<rect x="736" y="1162" width="10.5" height="10.5" fill="#a9ffef"/>
<rect x="746" y="1162" width="10.5" height="10.5" fill="#adffef"/>
<rect x="756" y="1162" width="10.5" height="10.5" fill="#b1ffef"/>
<rect x="766" y="1162" width="10.5" height="10.5" fill="#b6ffef"/>
<rect x="776" y="1162" width="10.5" height="10.5" fill="#baffef"/>
<rect x="786" y="1162" width="10.5" height="10.5" fill="#bfffef"/>
<rect x="796" y="1162" width="10.5" height="10.5" fill="#c3ffee"/>
<rect x="806" y="1162" width="10.5" height="10.5" fill="#c8ffee"/>
<rect x="816" y="1162" width="10.5" height="10.5" fill="#cdffee"/>
<rect x="826" y="1162" width="10.5" height="10.5" fill="#d1ffee"/>
<rect x="836" y="1162" width="10.5" height="10.5" fill="#d6ffee"/>
<rect x="846" y="1162" width="10.5" height="10.5" fill="#dbffee"/>
<rect x="856" y="1162" width="10.5" height="10.5" fill="#dfffee"/>
<rect x="866" y="1162" width="10.5" height="10.5" fill="#e4ffee"/>
<rect x="876" y="1162" width="10.5" height="10.5" fill="#e9ffee"/>
<rect x="886" y="1162" width="10.5" height="10.5" fill="#eeffee"/>
<rect x="896" y="1162" width="10.5" height="10.5" fill="#f3ffee"/>
<rect x="906" y="1162" width="10.5" height="10.5" fill="#f8ffee"/>
<rect x="916" y="1162" width="10.5" height="10.5" fill="#fdffee"/>
<rect x="926" y="1162" width="10.5" height="10.5" fill="#fffceb"/>
<rect x="936" y="1162" width="10.5" height="10.5" fill="#fff8e7"/>
<rect x="946" y="1162" width="10.5" height="10.5" fill="#fff3e2"/>
<rect x="956" y="1162" width="10.5" height="10.5" fill="#ffeede"/>
<rect x="966" y="1162" width="10.5" height="10.5" fill="#ffeada"/>
<rect x="976" y="1162" width="10.5" height="10.5" fill="#ffe5d6"/>
<rect x="986" y="1162" width="10.5" height="10.5" fill="#ffe1d2"/>
<rect x="996" y="1162" width="10.5" height="10.5" fill="#ffddce"/>
<rect x="1006" y="1162" width="10.5" height="10.5" fill="#ffd9ca"/>
<rect x="1016" y="1162" width="10.5" height="10.5" fill="#ffd5c6"/>
<rect x="1026" y="1162" width="10.5" height="10.5" fill="#ffd2c3"/>
<rect x="1036" y="1162" width="10.5" height="10.5" fill="#ffcebf"/>
<rect x="1046" y="1162" width="10.5" height="10.5" fill="#ffcabc"/>
<rect x="1056" y="1162" width="10.5" height="10.5" fill="#ffc7b9"/>
<rect x="1066" y="1162" width="10.5" height="10.5" fill="#ffc3b5"/>
<rect x="1076" y="1162" width="10.5" height="10.5" fill="#ffc0b2"/>
<rect x="1086" y="1162" width="10.5" height="10.5" fill="#ffbdaf"/>
<rect x="696" y="1172" width="10.5" height="10.5" fill="#9bfff3"/>
<rect x="706" y="1172" width="10.5" height="10.5" fill="#9ffff3"/>
<rect x="716" y="1172" width="10.5" height="10.5" fill="#a3fff3"/>
<rect x="726" y="1172" width="10.5" height="10.5" fill="#a8fff3"/>
<rect x="736" y="1172" width="10.5" height="10.5" fill="#acfff3"/>
<rect x="746" y="1172" width="10.5" height="10.5" fill="#b1fff3"/>
<rect x="756" y="1172" width="10.5" height="10.5" fill="#b5fff3"/>
<rect x="766" y="1172" width="10.5" height="10.5" fill="#bafff3"/>
<rect x="776" y="1172" width="10.5" height="10.5" fill="#befff3"/>
<rect x="786" y="1172" width="10.5" height="10.5" fill="#c3fff3"/>
<rect x="796" y="1172" width="10.5" height="10.5" fill="#c7fff3"/>
<rect x="806" y="1172" width="10.5" height="10.5" fill="#ccfff3"/>
<rect x="816" y="1172" width="10.5" height="10.5" fill="#d0fff3"/>
<rect x="826" y="1172" width="10.5" height="10.5" fill="#d5fff3"/>
<rect x="836" y="1172" width="10.5" height="10.5" fill="#dafff3"/>
<rect x="846" y="1172" width="10.5" height="10.5" fill="#dffff3"/>
<rect x="856" y="1172" width="10.5" height="10.5" fill="#e3fff3"/>
<rect x="866" y="1172" width="10.5" height="10.5" fill="#e8fff3"/>
<rect x="876" y="1172" width="10.5" height="10.5" fill="#edfff3"/>
<rect x="886" y="1172" width="10.5" height="10.5" fill="#f2fff3"/>
<rect x="896" y="1172" width="10.5" height="10.5" fill="#f7fff3"/>
<rect x="906" y="1172" width="10.5" height="10.5" fill="#fcfff3"/>
<rect x="916" y="1172" width="10.5" height="10.5" fill="#fffdf0"/>
<rect x="926" y="1172" width="10.5" height="10.5" fill="#fff8ec"/>
<rect x="936" y="1172" width="10.5" height="10.5" fill="#fff3e7"/>
<rect x="946" y="1172" width="10.5" height="10.5" fill="#ffeee3"/>
<rect x="956" y="1172" width="10.5" height="10.5" fill="#ffeade"/>
<rect x="966" y="1172" width="10.5" height="10.5" fill="#ffe6da"/>
<rect x="976" y="1172" width="10.5" height="10.5" fill="#ffe1d6"/>
<rect x="986" y="1172" width="10.5" height="10.5" fill="#ffddd2"/>
<rect x="996" y="1172" width="10.5" height="10.5" fill="#ffd9ce"/>
<rect x="1006" y="1172" width="10.5" height="10.5" fill="#ffd5cb"/>
<rect x="1016" y="1172" width="10.5" height="10.5" fill="#ffd2c7"/>
<rect x="1026" y="1172" width="10.5" height="10.5" fill="#ffcec3"/>
<rect x="1036" y="1172" width="10.5" height="10.5" fill="#ffcac0"/>
<rect x="1046" y="1172" width="10.5" height="10.5" fill="#ffc7bd"/>
<rect x="1056" y="1172" width="10.5" height="10.5" fill="#ffc3b9"/>
<rect x="1066" y="1172" width="10.5" height="10.5" fill="#ffc0b6"/>
<rect x="1076" y="1172" width="10.5" height="10.5" fill="#ffbdb3"/>
<rect x="1086" y="1172" width="10.5" height="10.5" fill="#ffbab0"/>
<rect x="696" y="1182" width="10.5" height="10.5" fill="#9efff8"/>
<rect x="706" y="1182" width="10.5" height="10.5" fill="#a2fff8"/>
<rect x="716" y="1182" width="10.5" height="10.5" fill="#a7fff8"/>
<rect x="726" y="1182" width="10.5" height="10.5" fill="#abfff8"/>
<rect x="736" y="1182" width="10.5" height="10.5" fill="#b0fff8"/>
<rect x="746" y="1182" width="10.5" height="10.5" fill="#b4fff8"/>
<rect x="756" y="1182" width="10.5" height="10.5" fill="#b9fff8"/>
<rect x="766" y="1182" width="10.5" height="10.5" fill="#bdfff8"/>
<rect x="776" y="1182" width="10.5" height="10.5" fill="#c2fff8"/>
<rect x="786" y="1182" width="10.5" height="10.5" fill="#c6fff8"/>
<rect x="796" y="1182" width="10.5" height="10.5" fill="#cbfff8"/>
<rect x="806" y="1182" width="10.5" height="10.5" fill="#d0fff8"/>
<rect x="816" y="1182" width="10.5" height="10.5" fill="#d4fff8"/>
<rect x="826" y="1182" width="10.5" height="10.5" fill="#d9fff8"/>
<rect x="836" y="1182" width="10.5" height="10.5" fill="#defff8"/>
<rect x="846" y="1182" width="10.5" height="10.5" fill="#e3fff8"/>
<rect x="856" y="1182" width="10.5" height="10.5" fill="#e8fff8"/>
<rect x="866" y="1182" width="10.5" height="10.5" fill="#edfff8"/>
<rect x="876" y="1182" width="10.5" height="10.5" fill="#f2fff8"/>
<rect x="886" y="1182" width="10.5" height="10.5" fill="#f7fff8"/>
<rect x="896" y="1182" width="10.5" height="10.5" fill="#fcfff8"/>
<rect x="906" y="1182" width="10.5" height="10.5" fill="#fffdf6"/>
<rect x="916" y="1182" width="10.5" height="10.5" fill="#fff8f1"/>
<rect x="926" y="1182" width="10.5" height="10.5" fill="#fff3ec"/>
<rect x="936" y="1182" width="10.5" height="10.5" fill="#ffefe8"/>
<rect x="946" y="1182" width="10.5" height="10.5" fill="#ffeae3"/>
<rect x="956" y="1182" width="10.5" height="10.5" fill="#ffe6df"/>
<rect x="966" y="1182" width="10.5" height="10.5" fill="#ffe1db"/>
<rect x="976" y="1182" width="10.5" height="10.5" fill="#ffddd7"/>
<rect x="986" y="1182" width="10.5" height="10.5" fill="#ffd9d3"/>
<rect x="996" y="1182" width="10.5" height="10.5" fill="#ffd5cf"/>
<rect x="1006" y="1182" width="10.5" height="10.5" fill="#ffd1cb"/>
<rect x="1016" y="1182" width="10.5" height="10.5" fill="#ffcec8"/>
<rect x="1026" y="1182" width="10.5" height="10.5" fill="#ffcac4"/>
<rect x="1036" y="1182" width="10.5" height="10.5" fill="#ffc7c1"/>
<rect x="1046" y="1182" width="10.5" height="10.5" fill="#ffc3bd"/>
<rect x="1056" y="1182" width="10.5" height="10.5" fill="#ffc0ba"/>
<rect x="1066" y="1182" width="10.5" height="10.5" fill="#ffbdb7"/>
<rect x="1076" y="1182" width="10.5" height="10.5" fill="#ffb9b4"/>
<rect x="1086" y="1182" width="10.5" height="10.5" fill="#ffb6b1"/>
<rect x="696" y="1192" width="10.5" height="10.5" fill="#a1fffd"/>
<rect x="706" y="1192" width="10.5" height="10.5" fill="#a6fffd"/>
<rect x="716" y="1192" width="10.5" height="10.5" fill="#aafffd"/>
<rect x="726" y="1192" width="10.5" height="10.5" fill="#affffd"/>
<rect x="736" y="1192" width="10.5" height="10.5" fill="#b3fffd"/>
<rect x="746" y="1192" width="10.5" height="10.5" fill="#b8fffd"/>
<rect x="756" y="1192" width="10.5" height="10.5" fill="#bcfffd"/>
<rect x="766" y="1192" width="10.5" height="10.5" fill="#c1fffd"/>
<rect x="776" y="1192" width="10.5" height="10.5" fill="#c6fffd"/>
<rect x="786" y="1192" width="10.5" height="10.5" fill="#cafffd"/>
<rect x="796" y="1192" width="10.5" height="10.5" fill="#cffffd"/>
<rect x="806" y="1192" width="10.5" height="10.5" fill="#d4fffd"/>
<rect x="816" y="1192" width="10.5" height="10.5" fill="#d9fffd"/>
<rect x="826" y="1192" width="10.5" height="10.5" fill="#ddfffd"/>
<rect x="836" y="1192" width="10.5" height="10.5" fill="#e2fffd"/>
<rect x="846" y="1192" width="10.5" height="10.5" fill="#e7fffd"/>
<rect x="856" y="1192" width="10.5" height="10.5" fill="#ecfffd"/>
<rect x="866" y="1192" width="10.5" height="10.5" fill="#f1fffd"/>
<rect x="876" y="1192" width="10.5" height="10.5" fill="#f6fffd"/>
<rect x="886" y="1192" width="10.5" height="10.5" fill="#fbfffd"/>
<rect x="896" y="1192" width="10.5" height="10.5" fill="#fffefb"/>
<rect x="906" y="1192" width="10.5" height="10.5" fill="#fff8f6"/>
<rect x="916" y="1192" width="10.5" height="10.5" fill="#fff4f1"/>
<rect x="926" y="1192" width="10.5" height="10.5" fill="#ffefed"/>
<rect x="936" y="1192" width="10.5" height="10.5" fill="#ffeae8"/>
<rect x="946" y="1192" width="10.5" height="10.5" fill="#ffe6e4"/>
<rect x="956" y="1192" width="10.5" height="10.5" fill="#ffe2df"/>
<rect x="966" y="1192" width="10.5" height="10.5" fill="#ffdddb"/>
<rect x="976" y="1192" width="10.5" height="10.5" fill="#ffd9d7"/>
<rect x="986" y="1192" width="10.5" height="10.5" fill="#ffd5d3"/>
<rect x="996" y="1192" width="10.5" height="10.5" fill="#ffd1d0"/>
<rect x="1006" y="1192" width="10.5" height="10.5" fill="#ffcecc"/>
<rect x="1016" y="1192" width="10.5" height="10.5" fill="#ffcac8"/>
<rect x="1026" y="1192" width="10.5" height="10.5" fill="#ffc7c5"/>
<rect x="1036" y="1192" width="10.5" height="10.5" fill="#ffc3c1"/>
<rect x="1046" y="1192" width="10.5" height="10.5" fill="#ffc0be"/>
<rect x="1056" y="1192" width="10.5" height="10.5" fill="#ffbcbb"/>
<rect x="1066" y="1192" width="10.5" height="10.5" fill="#ffb9b7"/>
<rect x="1076" y="1192" width="10.5" height="10.5" fill="#ffb6b4"/>
<rect x="1086" y="1192" width="10.5" height="10.5" fill="#ffb3b1"/>
<rect x="696" y="1202" width="10.5" height="10.5" fill="#a3fdff"/>
<rect x="706" y="1202" width="10.5" height="10.5" fill="#a8fdff"/>
<rect x="716" y="1202" width="10.5" height="10.5" fill="#acfdff"/>
<rect x="726" y="1202" width="10.5" height="10.5" fill="#b1fdff"/>
<rect x="736" y="1202" width="10.5" height="10.5" fill="#b5fdff"/>
<rect x="746" y="1202" width="10.5" height="10.5" fill="#bafdff"/>
<rect x="756" y="1202" width="10.5" height="10.5" fill="#befcff"/>
<rect x="766" y="1202" width="10.5" height="10.5" fill="#c3fcff"/>
<rect x="776" y="1202" width="10.5" height="10.5" fill="#c8fcff"/>
<rect x="786" y="1202" width="10.5" height="10.5" fill="#ccfcff"/>
<rect x="796" y="1202" width="10.5" height="10.5" fill="#d1fcff"/>
<rect x="806" y="1202" width="10.5" height="10.5" fill="#d6fcff"/>
<rect x="816" y="1202" width="10.5" height="10.5" fill="#dbfcff"/>
<rect x="826" y="1202" width="10.5" height="10.5" fill="#dffcff"/>
<rect x="836" y="1202" width="10.5" height="10.5" fill="#e4fcff"/>
<rect x="846" y="1202" width="10.5" height="10.5" fill="#e9fcff"/>
<rect x="856" y="1202" width="10.5" height="10.5" fill="#eefcff"/>
<rect x="866" y="1202" width="10.5" height="10.5" fill="#f3fcff"/>
<rect x="876" y="1202" width="10.5" height="10.5" fill="#f8fcff"/>
<rect x="886" y="1202" width="10.5" height="10.5" fill="#fdfcff"/>
<rect x="896" y="1202" width="10.5" height="10.5" fill="#fff9fc"/>
<rect x="906" y="1202" width="10.5" height="10.5" fill="#fff4f7"/>
<rect x="916" y="1202" width="10.5" height="10.5" fill="#ffeff2"/>
<rect x="926" y="1202" width="10.5" height="10.5" fill="#ffebed"/>
<rect x="936" y="1202" width="10.5" height="10.5" fill="#ffe6e9"/>
<rect x="946" y="1202" width="10.5" height="10.5" fill="#ffe2e4"/>
<rect x="956" y="1202" width="10.5" height="10.5" fill="#ffdde0"/>
<rect x="966" y="1202" width="10.5" height="10.5" fill="#ffd9dc"/>
<rect x="976" y="1202" width="10.5" height="10.5" fill="#ffd5d8"/>
<rect x="986" y="1202" width="10.5" height="10.5" fill="#ffd1d4"/>
<rect x="996" y="1202" width="10.5" height="10.5" fill="#ffced0"/>
<rect x="1006" y="1202" width="10.5" height="10.5" fill="#ffcacc"/>
<rect x="1016" y="1202" width="10.5" height="10.5" fill="#ffc6c9"/>
<rect x="1026" y="1202" width="10.5" height="10.5" fill="#ffc3c5"/>
<rect x="1036" y="1202" width="10.5" height="10.5" fill="#ffc0c2"/>
<rect x="1046" y="1202" width="10.5" height="10.5" fill="#ffbcbf"/>
<rect x="1056" y="1202" width="10.5" height="10.5" fill="#ffb9bb"/>
<rect x="1066" y="1202" width="10.5" height="10.5" fill="#ffb6b8"/>
<rect x="1076" y="1202" width="10.5" height="10.5" fill="#ffb3b5"/>
<rect x="1086" y="1202" width="10.5" height="10.5" fill="#ffb0b2"/>
<rect x="696" y="1212" width="10.5" height="10.5" fill="#a4f8ff"/>
<rect x="706" y="1212" width="10.5" height="10.5" fill="#a8f8ff"/>
<rect x="716" y="1212" width="10.5" height="10.5" fill="#acf8ff"/>
<rect x="726" y="1212" width="10.5" height="10.5" fill="#b1f8ff"/>
<rect x="736" y="1212" width="10.5" height="10.5" fill="#b5f8ff"/>
<rect x="746" y="1212" width="10.5" height="10.5" fill="#baf8ff"/>
<rect x="756" y="1212" width="10.5" height="10.5" fill="#bef8ff"/>
<rect x="766" y="1212" width="10.5" height="10.5" fill="#c3f8ff"/>
<rect x="776" y="1212" width="10.5" height="10.5" fill="#c8f8ff"/>
<rect x="786" y="1212" width="10.5" height="10.5" fill="#ccf8ff"/>
<rect x="796" y="1212" width="10.5" height="10.5" fill="#d1f8ff"/>
<rect x="806" y="1212" width="10.5" height="10.5" fill="#d6f8ff"/>
<rect x="816" y="1212" width="10.5" height="10.5" fill="#daf7ff"/>
<rect x="826" y="1212" width="10.5" height="10.5" fill="#dff7ff"/>
<rect x="836" y="1212" width="10.5" height="10.5" fill="#e4f7ff"/>
<rect x="846" y="1212" width="10.5" height="10.5" fill="#e9f7ff"/>
<rect x="856" y="1212" width="10.5" height="10.5" fill="#eef7ff"/>
<rect x="866" y="1212" width="10.5" height="10.5" fill="#f3f7ff"/>
<rect x="876" y="1212" width="10.5" height="10.5" fill="#f8f7ff"/>
<rect x="886" y="1212" width="10.5" height="10.5" fill="#fdf7ff"/>
<rect x="896" y="1212" width="10.5" height="10.5" fill="#fff4fc"/>
<rect x="906" y="1212" width="10.5" height="10.5" fill="#ffeff7"/>
<rect x="916" y="1212" width="10.5" height="10.5" fill="#ffebf2"/>
<rect x="926" y="1212" width="10.5" height="10.5" fill="#ffe6ee"/>
<rect x="936" y="1212" width="10.5" height="10.5" fill="#ffe2e9"/>
<rect x="946" y="1212" width="10.5" height="10.5" fill="#ffdee5"/>
<rect x="956" y="1212" width="10.5" height="10.5" fill="#ffd9e1"/>
<rect x="966" y="1212" width="10.5" height="10.5" fill="#ffd5dc"/>
<rect x="976" y="1212" width="10.5" height="10.5" fill="#ffd1d8"/>
<rect x="986" y="1212" width="10.5" height="10.5" fill="#ffced5"/>
<rect x="996" y="1212" width="10.5" height="10.5" fill="#ffcad1"/>
<rect x="1006" y="1212" width="10.5" height="10.5" fill="#ffc6cd"/>
<rect x="1016" y="1212" width="10.5" height="10.5" fill="#ffc3c9"/>
<rect x="1026" y="1212" width="10.5" height="10.5" fill="#ffbfc6"/>
<rect x="1036" y="1212" width="10.5" height="10.5" fill="#ffbcc3"/>
<rect x="1046" y="1212" width="10.5" height="10.5" fill="#ffb9bf"/>
<rect x="1056" y="1212" width="10.5" height="10.5" fill="#ffb6bc"/>
<rect x="1066" y="1212" width="10.5" height="10.5" fill="#ffb3b9"/>
<rect x="1076" y="1212" width="10.5" height="10.5" fill="#ffb0b6"/>
<rect x="1086" y="1212" width="10.5" height="10.5" fill="#ffadb3"/>
<rect x="696" y="1222" width="10.5" height="10.5" fill="#a4f3ff"/>
<rect x="706" y="1222" width="10.5" height="10.5" fill="#a8f3ff"/>
<rect x="716" y="1222" width="10.5" height="10.5" fill="#adf3ff"/>
<rect x="726" y="1222" width="10.5" height="10.5" fill="#b1f3ff"/>
<rect x="736" y="1222" width="10.5" height="10.5" fill="#b6f3ff"/>
<rect x="746" y="1222" width="10.5" height="10.5" fill="#baf3ff"/>
<rect x="756" y="1222" width="10.5" height="10.5" fill="#bff3ff"/>
<rect x="766" y="1222" width="10.5" height="10.5" fill="#c3f3ff"/>
<rect x="776" y="1222" width="10.5" height="10.5" fill="#c8f3ff"/>
<rect x="786" y="1222" width="10.5" height="10.5" fill="#ccf3ff"/>
<rect x="796" y="1222" width="10.5" height="10.5" fill="#d1f3ff"/>
<rect x="806" y="1222" width="10.5" height="10.5" fill="#d6f3ff"/>
<rect x="816" y="1222" width="10.5" height="10.5" fill="#daf3ff"/>
<rect x="826" y="1222" width="10.5" height="10.5" fill="#dff3ff"/>
<rect x="836" y="1222" width="10.5" height="10.5" fill="#e4f3ff"/>
<rect x="846" y="1222" width="10.5" height="10.5" fill="#e9f2ff"/>
<rect x="856" y="1222" width="10.5" height="10.5" fill="#eef2ff"/>
<rect x="866" y="1222" width="10.5" height="10.5" fill="#f3f2ff"/>
<rect x="876" y="1222" width="10.5" height="10.5" fill="#f8f2ff"/>
<rect x="886" y="1222" width="10.5" height="10.5" fill="#fdf2ff"/>
<rect x="896" y="1222" width="10.5" height="10.5" fill="#fff0fc"/>
<rect x="906" y="1222" width="10.5" height="10.5" fill="#ffebf7"/>
<rect x="916" y="1222" width="10.5" height="10.5" fill="#ffe6f3"/>
<rect x="926" y="1222" width="10.5" height="10.5" fill="#ffe2ee"/>
<rect x="936" y="1222" width="10.5" height="10.5" fill="#ffdeea"/>
<rect x="946" y="1222" width="10.5" height="10.5" fill="#ffd9e5"/>
<rect x="956" y="1222" width="10.5" height="10.5" fill="#ffd5e1"/>
<rect x="966" y="1222" width="10.5" height="10.5" fill="#ffd1dd"/>
<rect x="976" y="1222" width="10.5" height="10.5" fill="#ffced9"/>
<rect x="986" y="1222" width="10.5" height="10.5" fill="#ffcad5"/>
<rect x="996" y="1222" width="10.5" height="10.5" fill="#ffc6d1"/>
<rect x="1006" y="1222" width="10.5" height="10.5" fill="#ffc3ce"/>
<rect x="1016" y="1222" width="10.5" height="10.5" fill="#ffbfca"/>
<rect x="1026" y="1222" width="10.5" height="10.5" fill="#ffbcc7"/>
<rect x="1036" y="1222" width="10.5" height="10.5" fill="#ffb9c3"/>
<rect x="1046" y="1222" width="10.5" height="10.5" fill="#ffb5c0"/>
<rect x="1056" y="1222" width="10.5" height="10.5" fill="#ffb2bd"/>
<rect x="1066" y="1222" width="10.5" height="10.5" fill="#ffafb9"/>
<rect x="1076" y="1222" width="10.5" height="10.5" fill="#ffacb6"/>
<rect x="1086" y="1222" width="10.5" height="10.5" fill="#ffa9b3"/>
<rect x="696" y="1232" width="10.5" height="10.5" fill="#a4efff"/>
<rect x="706" y="1232" width="10.5" height="10.5" fill="#a9efff"/>
<rect x="716" y="1232" width="10.5" height="10.5" fill="#adefff"/>
<rect x="726" y="1232" width="10.5" height="10.5" fill="#b1efff"/>
<rect x="736" y="1232" width="10.5" height="10.5" fill="#b6eeff"/>
<rect x="746" y="1232" width="10.5" height="10.5" fill="#baeeff"/>
<rect x="756" y="1232" width="10.5" height="10.5" fill="#bfeeff"/>
<rect x="766" y="1232" width="10.5" height="10.5" fill="#c3eeff"/>
<rect x="776" y="1232" width="10.5" height="10.5" fill="#c8eeff"/>
<rect x="786" y="1232" width="10.5" height="10.5" fill="#cceeff"/>
<rect x="796" y="1232" width="10.5" height="10.5" fill="#d1eeff"/>
<rect x="806" y="1232" width="10.5" height="10.5" fill="#d6eeff"/>
<rect x="816" y="1232" width="10.5" height="10.5" fill="#daeeff"/>
<rect x="826" y="1232" width="10.5" height="10.5" fill="#dfeeff"/>
<rect x="836" y="1232" width="10.5" height="10.5" fill="#e4eeff"/>
<rect x="846" y="1232" width="10.5" height="10.5" fill="#e9eeff"/>
<rect x="856" y="1232" width="10.5" height="10.5" fill="#eeeeff"/>
<rect x="866" y="1232" width="10.5" height="10.5" fill="#f2edff"/>
<rect x="876" y="1232" width="10.5" height="10.5" fill="#f7edff"/>
<rect x="886" y="1232" width="10.5" height="10.5" fill="#fcedff"/>
<rect x="896" y="1232" width="10.5" height="10.5" fill="#ffebfd"/>
<rect x="906" y="1232" width="10.5" height="10.5" fill="#ffe6f8"/>
<rect x="916" y="1232" width="10.5" height="10.5" fill="#ffe2f3"/>
<rect x="926" y="1232" width="10.5" height="10.5" fill="#ffdeef"/>
<rect x="936" y="1232" width="10.5" height="10.5" fill="#ffd9ea"/>
<rect x="946" y="1232" width="10.5" height="10.5" fill="#ffd5e6"/>
<rect x="956" y="1232" width="10.5" height="10.5" fill="#ffd1e2"/>
<rect x="966" y="1232" width="10.5" height="10.5" fill="#ffcddd"/>
<rect x="976" y="1232" width="10.5" height="10.5" fill="#ffcad9"/>
<rect x="986" y="1232" width="10.5" height="10.5" fill="#ffc6d6"/>
<rect x="996" y="1232" width="10.5" height="10.5" fill="#ffc3d2"/>
<rect x="1006" y="1232" width="10.5" height="10.5" fill="#ffbfce"/>
<rect x="1016" y="1232" width="10.5" height="10.5" fill="#ffbccb"/>
<rect x="1026" y="1232" width="10.5" height="10.5" fill="#ffb8c7"/>
<rect x="1036" y="1232" width="10.5" height="10.5" fill="#ffb5c4"/>
<rect x="1046" y="1232" width="10.5" height="10.5" fill="#ffb2c0"/>
<rect x="1056" y="1232" width="10.5" height="10.5" fill="#ffafbd"/>
<rect x="1066" y="1232" width="10.5" height="10.5" fill="#ffacba"/>
<rect x="1076" y="1232" width="10.5" height="10.5" fill="#ffa9b7"/>
<rect x="1086" y="1232" width="10.5" height="10.5" fill="#ffa6b4"/>
<rect x="696" y="1242" width="10.5" height="10.5" fill="#a5eaff"/>
<rect x="706" y="1242" width="10.5" height="10.5" fill="#a9eaff"/>
<rect x="716" y="1242" width="10.5" height="10.5" fill="#adeaff"/>
<rect x="726" y="1242" width="10.5" height="10.5" fill="#b2eaff"/>
<rect x="736" y="1242" width="10.5" height="10.5" fill="#b6eaff"/>
<rect x="746" y="1242" width="10.5" height="10.5" fill="#baeaff"/>
<rect x="756" y="1242" width="10.5" height="10.5" fill="#bfeaff"/>
<rect x="766" y="1242" width="10.5" height="10.5" fill="#c3eaff"/>
<rect x="776" y="1242" width="10.5" height="10.5" fill="#c8eaff"/>
<rect x="786" y="1242" width="10.5" height="10.5" fill="#cce9ff"/>
<rect x="796" y="1242" width="10.5" height="10.5" fill="#d1e9ff"/>
<rect x="806" y="1242" width="10.5" height="10.5" fill="#d6e9ff"/>
<rect x="816" y="1242" width="10.5" height="10.5" fill="#dae9ff"/>
<rect x="826" y="1242" width="10.5" height="10.5" fill="#dfe9ff"/>
<rect x="836" y="1242" width="10.5" height="10.5" fill="#e4e9ff"/>
<rect x="846" y="1242" width="10.5" height="10.5" fill="#e8e9ff"/>
<rect x="856" y="1242" width="10.5" height="10.5" fill="#ede9ff"/>
<rect x="866" y="1242" width="10.5" height="10.5" fill="#f2e9ff"/>
<rect x="876" y="1242" width="10.5" height="10.5" fill="#f7e9ff"/>
<rect x="886" y="1242" width="10.5" height="10.5" fill="#fce8ff"/>
<rect x="896" y="1242" width="10.5" height="10.5" fill="#ffe7fd"/>
<rect x="906" y="1242" width="10.5" height="10.5" fill="#ffe2f8"/>
<rect x="916" y="1242" width="10.5" height="10.5" fill="#ffdef4"/>
<rect x="926" y="1242" width="10.5" height="10.5" fill="#ffd9ef"/>
<rect x="936" y="1242" width="10.5" height="10.5" fill="#ffd5eb"/>
<rect x="946" y="1242" width="10.5" height="10.5" fill="#ffd1e6"/>
<rect x="956" y="1242" width="10.5" height="10.5" fill="#ffcde2"/>
<rect x="966" y="1242" width="10.5" height="10.5" fill="#ffcade"/>
<rect x="976" y="1242" width="10.5" height="10.5" fill="#ffc6da"/>
<rect x="986" y="1242" width="10.5" height="10.5" fill="#ffc2d6"/>
<rect x="996" y="1242" width="10.5" height="10.5" fill="#ffbfd2"/>
<rect x="1006" y="1242" width="10.5" height="10.5" fill="#ffbbcf"/>
<rect x="1016" y="1242" width="10.5" height="10.5" fill="#ffb8cb"/>
<rect x="1026" y="1242" width="10.5" height="10.5" fill="#ffb5c8"/>
<rect x="1036" y="1242" width="10.5" height="10.5" fill="#ffb2c4"/>
<rect x="1046" y="1242" width="10.5" height="10.5" fill="#ffafc1"/>
<rect x="1056" y="1242" width="10.5" height="10.5" fill="#ffacbe"/>
<rect x="1066" y="1242" width="10.5" height="10.5" fill="#ffa9bb"/>
<rect x="1076" y="1242" width="10.5" height="10.5" fill="#ffa6b8"/>
<rect x="1086" y="1242" width="10.5" height="10.5" fill="#ffa3b5"/>
<rect x="696" y="1252" width="10.5" height="10.5" fill="#a5e6ff"/>
<rect x="706" y="1252" width="10.5" height="10.5" fill="#a9e6ff"/>
<rect x="716" y="1252" width="10.5" height="10.5" fill="#aee6ff"/>
<rect x="726" y="1252" width="10.5" height="10.5" fill="#b2e6ff"/>
<rect x="736" y="1252" width="10.5" height="10.5" fill="#b6e5ff"/>
<rect x="746" y="1252" width="10.5" height="10.5" fill="#bbe5ff"/>
<rect x="756" y="1252" width="10.5" height="10.5" fill="#bfe5ff"/>
<rect x="766" y="1252" width="10.5" height="10.5" fill="#c3e5ff"/>
<rect x="776" y="1252" width="10.5" height="10.5" fill="#c8e5ff"/>
<rect x="786" y="1252" width="10.5" height="10.5" fill="#cce5ff"/>
<rect x="796" y="1252" width="10.5" height="10.5" fill="#d1e5ff"/>
<rect x="806" y="1252" width="10.5" height="10.5" fill="#d6e5ff"/>
<rect x="816" y="1252" width="10.5" height="10.5" fill="#dae5ff"/>
<rect x="826" y="1252" width="10.5" height="10.5" fill="#dfe4ff"/>
<rect x="836" y="1252" width="10.5" height="10.5" fill="#e4e4ff"/>
<rect x="846" y="1252" width="10.5" height="10.5" fill="#e8e4ff"/>
<rect x="856" y="1252" width="10.5" height="10.5" fill="#ede4ff"/>
<rect x="866" y="1252" width="10.5" height="10.5" fill="#f2e4ff"/>
<rect x="876" y="1252" width="10.5" height="10.5" fill="#f7e4ff"/>
<rect x="886" y="1252" width="10.5" height="10.5" fill="#fce4ff"/>
<rect x="896" y="1252" width="10.5" height="10.5" fill="#ffe2fd"/>
<rect x="906" y="1252" width="10.5" height="10.5" fill="#ffdef9"/>
<rect x="916" y="1252" width="10.5" height="10.5" fill="#ffdaf4"/>
<rect x="926" y="1252" width="10.5" height="10.5" fill="#ffd5ef"/>
<rect x="936" y="1252" width="10.5" height="10.5" fill="#ffd1eb"/>
<rect x="946" y="1252" width="10.5" height="10.5" fill="#ffcde7"/>
<rect x="956" y="1252" width="10.5" height="10.5" fill="#ffcae3"/>
<rect x="966" y="1252" width="10.5" height="10.5" fill="#ffc6de"/>
<rect x="976" y="1252" width="10.5" height="10.5" fill="#ffc2db"/>
<rect x="986" y="1252" width="10.5" height="10.5" fill="#ffbfd7"/>
<rect x="996" y="1252" width="10.5" height="10.5" fill="#ffbbd3"/>
<rect x="1006" y="1252" width="10.5" height="10.5" fill="#ffb8cf"/>
<rect x="1016" y="1252" width="10.5" height="10.5" fill="#ffb5cc"/>
<rect x="1026" y="1252" width="10.5" height="10.5" fill="#ffb2c8"/>
<rect x="1036" y="1252" width="10.5" height="10.5" fill="#ffaec5"/>
<rect x="1046" y="1252" width="10.5" height="10.5" fill="#ffabc2"/>
<rect x="1056" y="1252" width="10.5" height="10.5" fill="#ffa8be"/>
<rect x="1066" y="1252" width="10.5" height="10.5" fill="#ffa6bb"/>
<rect x="1076" y="1252" width="10.5" height="10.5" fill="#ffa3b8"/>
<rect x="1086" y="1252" width="10.5" height="10.5" fill="#ffa0b5"/>
<rect x="696" y="1262" width="10.5" height="10.5" fill="#a5e2ff"/>
<rect x="706" y="1262" width="10.5" height="10.5" fill="#aae1ff"/>
<rect x="716" y="1262" width="10.5" height="10.5" fill="#aee1ff"/>
<rect x="726" y="1262" width="10.5" height="10.5" fill="#b2e1ff"/>
<rect x="736" y="1262" width="10.5" height="10.5" fill="#b6e1ff"/>
<rect x="746" y="1262" width="10.5" height="10.5" fill="#bbe1ff"/>
<rect x="756" y="1262" width="10.5" height="10.5" fill="#bfe1ff"/>
<rect x="766" y="1262" width="10.5" height="10.5" fill="#c4e1ff"/>
<rect x="776" y="1262" width="10.5" height="10.5" fill="#c8e1ff"/>
<rect x="786" y="1262" width="10.5" height="10.5" fill="#cce0ff"/>
<rect x="796" y="1262" width="10.5" height="10.5" fill="#d1e0ff"/>
<rect x="806" y="1262" width="10.5" height="10.5" fill="#d6e0ff"/>
<rect x="816" y="1262" width="10.5" height="10.5" fill="#dae0ff"/>
<rect x="826" y="1262" width="10.5" height="10.5" fill="#dfe0ff"/>
<rect x="836" y="1262" width="10.5" height="10.5" fill="#e3e0ff"/>
<rect x="846" y="1262" width="10.5" height="10.5" fill="#e8e0ff"/>
<rect x="856" y="1262" width="10.5" height="10.5" fill="#eddfff"/>
<rect x="866" y="1262" width="10.5" height="10.5" fill="#f2dfff"/>
<rect x="876" y="1262" width="10.5" height="10.5" fill="#f6dfff"/>
<rect x="886" y="1262" width="10.5" height="10.5" fill="#fbdfff"/>
<rect x="896" y="1262" width="10.5" height="10.5" fill="#ffdefe"/>
<rect x="906" y="1262" width="10.5" height="10.5" fill="#ffdaf9"/>
<rect x="916" y="1262" width="10.5" height="10.5" fill="#ffd5f4"/>
<rect x="926" y="1262" width="10.5" height="10.5" fill="#ffd1f0"/>
<rect x="936" y="1262" width="10.5" height="10.5" fill="#ffcdeb"/>
<rect x="946" y="1262" width="10.5" height="10.5" fill="#ffc9e7"/>
<rect x="956" y="1262" width="10.5" height="10.5" fill="#ffc6e3"/>
<rect x="966" y="1262" width="10.5" height="10.5" fill="#ffc2df"/>
<rect x="976" y="1262" width="10.5" height="10.5" fill="#ffbfdb"/>
<rect x="986" y="1262" width="10.5" height="10.5" fill="#ffbbd7"/>
<rect x="996" y="1262" width="10.5" height="10.5" fill="#ffb8d4"/>
<rect x="1006" y="1262" width="10.5" height="10.5" fill="#ffb4d0"/>
<rect x="1016" y="1262" width="10.5" height="10.5" fill="#ffb1cc"/>
<rect x="1026" y="1262" width="10.5" height="10.5" fill="#ffaec9"/>
<rect x="1036" y="1262" width="10.5" height="10.5" fill="#ffabc6"/>
<rect x="1046" y="1262" width="10.5" height="10.5" fill="#ffa8c2"/>
<rect x="1056" y="1262" width="10.5" height="10.5" fill="#ffa5bf"/>
<rect x="1066" y="1262" width="10.5" height="10.5" fill="#ffa2bc"/>
<rect x="1076" y="1262" width="10.5" height="10.5" fill="#ffa0b9"/>
<rect x="1086" y="1262" width="10.5" height="10.5" fill="#ff9db6"/>
<rect x="696" y="1272" width="10.5" height="10.5" fill="#a6ddff"/>
<rect x="706" y="1272" width="10.5" height="10.5" fill="#aaddff"/>
<rect x="716" y="1272" width="10.5" height="10.5" fill="#aeddff"/>
<rect x="726" y="1272" width="10.5" height="10.5" fill="#b2ddff"/>
<rect x="736" y="1272" width="10.5" height="10.5" fill="#b7ddff"/>
<rect x="746" y="1272" width="10.5" height="10.5" fill="#bbddff"/>
<rect x="756" y="1272" width="10.5" height="10.5" fill="#bfdcff"/>
<rect x="766" y="1272" width="10.5" height="10.5" fill="#c4dcff"/>
<rect x="776" y="1272" width="10.5" height="10.5" fill="#c8dcff"/>
<rect x="786" y="1272" width="10.5" height="10.5" fill="#cddcff"/>
<rect x="796" y="1272" width="10.5" height="10.5" fill="#d1dcff"/>
<rect x="806" y="1272" width="10.5" height="10.5" fill="#d6dcff"/>
<rect x="816" y="1272" width="10.5" height="10.5" fill="#dadcff"/>
<rect x="826" y="1272" width="10.5" height="10.5" fill="#dfdbff"/>
<rect x="836" y="1272" width="10.5" height="10.5" fill="#e3dbff"/>
<rect x="846" y="1272" width="10.5" height="10.5" fill="#e8dbff"/>
<rect x="856" y="1272" width="10.5" height="10.5" fill="#eddbff"/>
<rect x="866" y="1272" width="10.5" height="10.5" fill="#f1dbff"/>
<rect x="876" y="1272" width="10.5" height="10.5" fill="#f6dbff"/>
<rect x="886" y="1272" width="10.5" height="10.5" fill="#fbdaff"/>
<rect x="896" y="1272" width="10.5" height="10.5" fill="#ffdafe"/>
<rect x="906" y="1272" width="10.5" height="10.5" fill="#ffd5f9"/>
<rect x="916" y="1272" width="10.5" height="10.5" fill="#ffd1f5"/>
<rect x="926" y="1272" width="10.5" height="10.5" fill="#ffcdf0"/>
<rect x="936" y="1272" width="10.5" height="10.5" fill="#ffc9ec"/>
<rect x="946" y="1272" width="10.5" height="10.5" fill="#ffc6e8"/>
<rect x="956" y="1272" width="10.5" height="10.5" fill="#ffc2e4"/>
<rect x="966" y="1272" width="10.5" height="10.5" fill="#ffbedf"/>
<rect x="976" y="1272" width="10.5" height="10.5" fill="#ffbbdc"/>
<rect x="986" y="1272" width="10.5" height="10.5" fill="#ffb8d8"/>
<rect x="996" y="1272" width="10.5" height="10.5" fill="#ffb4d4"/>
<rect x="1006" y="1272" width="10.5" height="10.5" fill="#ffb1d0"/>
<rect x="1016" y="1272" width="10.5" height="10.5" fill="#ffaecd"/>
<rect x="1026" y="1272" width="10.5" height="10.5" fill="#ffabca"/>
<rect x="1036" y="1272" width="10.5" height="10.5" fill="#ffa8c6"/>
<rect x="1046" y="1272" width="10.5" height="10.5" fill="#ffa5c3"/>
<rect x="1056" y="1272" width="10.5" height="10.5" fill="#ffa2c0"/>
<rect x="1066" y="1272" width="10.5" height="10.5" fill="#ff9fbd"/>
<rect x="1076" y="1272" width="10.5" height="10.5" fill="#ff9dba"/>
<rect x="1086" y="1272" width="10.5" height="10.5" fill="#ff9ab7"/>
<rect x="696" y="1282" width="10.5" height="10.5" fill="#a6d9ff"/>
<rect x="706" y="1282" width="10.5" height="10.5" fill="#aad9ff"/>
<rect x="716" y="1282" width="10.5" height="10.5" fill="#aed9ff"/>
<rect x="726" y="1282" width="10.5" height="10.5" fill="#b3d9ff"/>
<rect x="736" y="1282" width="10.5" height="10.5" fill="#b7d8ff"/>
<rect x="746" y="1282" width="10.5" height="10.5" fill="#bbd8ff"/>
<rect x="756" y="1282" width="10.5" height="10.5" fill="#bfd8ff"/>
<rect x="766" y="1282" width="10.5" height="10.5" fill="#c4d8ff"/>
<rect x="776" y="1282" width="10.5" height="10.5" fill="#c8d8ff"/>
<rect x="786" y="1282" width="10.5" height="10.5" fill="#cdd8ff"/>
<rect x="796" y="1282" width="10.5" height="10.5" fill="#d1d7ff"/>
<rect x="806" y="1282" width="10.5" height="10.5" fill="#d6d7ff"/>
<rect x="816" y="1282" width="10.5" height="10.5" fill="#dad7ff"/>
<rect x="826" y="1282" width="10.5" height="10.5" fill="#dfd7ff"/>
<rect x="836" y="1282" width="10.5" height="10.5" fill="#e3d7ff"/>
<rect x="846" y="1282" width="10.5" height="10.5" fill="#e8d7ff"/>
<rect x="856" y="1282" width="10.5" height="10.5" fill="#ecd6ff"/>
<rect x="866" y="1282" width="10.5" height="10.5" fill="#f1d6ff"/>
<rect x="876" y="1282" width="10.5" height="10.5" fill="#f6d6ff"/>
<rect x="886" y="1282" width="10.5" height="10.5" fill="#fbd6ff"/>
<rect x="896" y="1282" width="10.5" height="10.5" fill="#ffd5ff"/>
<rect x="906" y="1282" width="10.5" height="10.5" fill="#ffd1fa"/>
<rect x="916" y="1282" width="10.5" height="10.5" fill="#ffcdf5"/>
<rect x="926" y="1282" width="10.5" height="10.5" fill="#ffc9f1"/>
<rect x="936" y="1282" width="10.5" height="10.5" fill="#ffc5ec"/>
<rect x="946" y="1282" width="10.5" height="10.5" fill="#ffc2e8"/>
<rect x="956" y="1282" width="10.5" height="10.5" fill="#ffbee4"/>
<rect x="966" y="1282" width="10.5" height="10.5" fill="#ffbbe0"/>
<rect x="976" y="1282" width="10.5" height="10.5" fill="#ffb7dc"/>
<rect x="986" y="1282" width="10.5" height="10.5" fill="#ffb4d8"/>
<rect x="996" y="1282" width="10.5" height="10.5" fill="#ffb1d5"/>
<rect x="1006" y="1282" width="10.5" height="10.5" fill="#ffaed1"/>
<rect x="1016" y="1282" width="10.5" height="10.5" fill="#ffabcd"/>
<rect x="1026" y="1282" width="10.5" height="10.5" fill="#ffa8ca"/>
<rect x="1036" y="1282" width="10.5" height="10.5" fill="#ffa5c7"/>
<rect x="1046" y="1282" width="10.5" height="10.5" fill="#ffa2c3"/>
<rect x="1056" y="1282" width="10.5" height="10.5" fill="#ff9fc0"/>
<rect x="1066" y="1282" width="10.5" height="10.5" fill="#ff9cbd"/>
<rect x="1076" y="1282" width="10.5" height="10.5" fill="#ff9aba"/>
<rect x="1086" y="1282" width="10.5" height="10.5" fill="#ff97b7"/>
<rect x="696" y="1292" width="10.5" height="10.5" fill="#a6d5ff"/>
<rect x="706" y="1292" width="10.5" height="10.5" fill="#aad5ff"/>
<rect x="716" y="1292" width="10.5" height="10.5" fill="#afd5ff"/>
<rect x="726" y="1292" width="10.5" height="10.5" fill="#b3d4ff"/>
<rect x="736" y="1292" width="10.5" height="10.5" fill="#b7d4ff"/>
<rect x="746" y="1292" width="10.5" height="10.5" fill="#bbd4ff"/>
<rect x="756" y="1292" width="10.5" height="10.5" fill="#c0d4ff"/>
<rect x="766" y="1292" width="10.5" height="10.5" fill="#c4d4ff"/>
<rect x="776" y="1292" width="10.5" height="10.5" fill="#c8d3ff"/>
<rect x="786" y="1292" width="10.5" height="10.5" fill="#cdd3ff"/>
<rect x="796" y="1292" width="10.5" height="10.5" fill="#d1d3ff"/>
<rect x="806" y="1292" width="10.5" height="10.5" fill="#d5d3ff"/>
<rect x="816" y="1292" width="10.5" height="10.5" fill="#dad3ff"/>
<rect x="826" y="1292" width="10.5" height="10.5" fill="#ded3ff"/>
<rect x="836" y="1292" width="10.5" height="10.5" fill="#e3d2ff"/>
<rect x="846" y="1292" width="10.5" height="10.5" fill="#e8d2ff"/>
<rect x="856" y="1292" width="10.5" height="10.5" fill="#ecd2ff"/>
<rect x="866" y="1292" width="10.5" height="10.5" fill="#f1d2ff"/>
<rect x="876" y="1292" width="10.5" height="10.5" fill="#f6d2ff"/>
<rect x="886" y="1292" width="10.5" height="10.5" fill="#fad2ff"/>
<rect x="896" y="1292" width="10.5" height="10.5" fill="#ffd1ff"/>
<rect x="906" y="1292" width="10.5" height="10.5" fill="#ffcdfa"/>
<rect x="916" y="1292" width="10.5" height="10.5" fill="#ffc9f6"/>
<rect x="926" y="1292" width="10.5" height="10.5" fill="#ffc5f1"/>
<rect x="936" y="1292" width="10.5" height="10.5" fill="#ffc2ed"/>
<rect x="946" y="1292" width="10.5" height="10.5" fill="#ffbee9"/>
<rect x="956" y="1292" width="10.5" height="10.5" fill="#ffbae4"/>
<rect x="966" y="1292" width="10.5" height="10.5" fill="#ffb7e0"/>
<rect x="976" y="1292" width="10.5" height="10.5" fill="#ffb4dd"/>
<rect x="986" y="1292" width="10.5" height="10.5" fill="#ffb0d9"/>
<rect x="996" y="1292" width="10.5" height="10.5" fill="#ffadd5"/>
<rect x="1006" y="1292" width="10.5" height="10.5" fill="#ffaad2"/>
<rect x="1016" y="1292" width="10.5" height="10.5" fill="#ffa7ce"/>
<rect x="1026" y="1292" width="10.5" height="10.5" fill="#ffa4cb"/>
<rect x="1036" y="1292" width="10.5" height="10.5" fill="#ffa1c7"/>
<rect x="1046" y="1292" width="10.5" height="10.5" fill="#ff9fc4"/>
<rect x="1056" y="1292" width="10.5" height="10.5" fill="#ff9cc1"/>
<rect x="1066" y="1292" width="10.5" height="10.5" fill="#ff99be"/>
<rect x="1076" y="1292" width="10.5" height="10.5" fill="#ff97bb"/>
<rect x="1086" y="1292" width="10.5" height="10.5" fill="#ff94b8"/>
<rect x="696" y="1302" width="10.5" height="10.5" fill="#a7d1ff"/>
<rect x="706" y="1302" width="10.5" height="10.5" fill="#abd1ff"/>
<rect x="716" y="1302" width="10.5" height="10.5" fill="#afd0ff"/>
<rect x="726" y="1302" width="10.5" height="10.5" fill="#b3d0ff"/>
<rect x="736" y="1302" width="10.5" height="10.5" fill="#b7d0ff"/>
<rect x="746" y="1302" width="10.5" height="10.5" fill="#bbd0ff"/>
<rect x="756" y="1302" width="10.5" height="10.5" fill="#c0d0ff"/>
<rect x="766" y="1302" width="10.5" height="10.5" fill="#c4cfff"/>
<rect x="776" y="1302" width="10.5" height="10.5" fill="#c8cfff"/>
<rect x="786" y="1302" width="10.5" height="10.5" fill="#cdcfff"/>
<rect x="796" y="1302" width="10.5" height="10.5" fill="#d1cfff"/>
<rect x="806" y="1302" width="10.5" height="10.5" fill="#d5cfff"/>
<rect x="816" y="1302" width="10.5" height="10.5" fill="#dacfff"/>
<rect x="826" y="1302" width="10.5" height="10.5" fill="#deceff"/>
<rect x="836" y="1302" width="10.5" height="10.5" fill="#e3ceff"/>
<rect x="846" y="1302" width="10.5" height="10.5" fill="#e7ceff"/>
<rect x="856" y="1302" width="10.5" height="10.5" fill="#ecceff"/>
<rect x="866" y="1302" width="10.5" height="10.5" fill="#f1ceff"/>
<rect x="876" y="1302" width="10.5" height="10.5" fill="#f5cdff"/>
<rect x="886" y="1302" width="10.5" height="10.5" fill="#facdff"/>
<rect x="896" y="1302" width="10.5" height="10.5" fill="#ffcdff"/>
<rect x="906" y="1302" width="10.5" height="10.5" fill="#ffc9fb"/>
<rect x="916" y="1302" width="10.5" height="10.5" fill="#ffc5f6"/>
<rect x="926" y="1302" width="10.5" height="10.5" fill="#ffc1f2"/>
<rect x="936" y="1302" width="10.5" height="10.5" fill="#ffbeed"/>
<rect x="946" y="1302" width="10.5" height="10.5" fill="#ffbae9"/>
<rect x="956" y="1302" width="10.5" height="10.5" fill="#ffb7e5"/>
<rect x="966" y="1302" width="10.5" height="10.5" fill="#ffb3e1"/>
<rect x="976" y="1302" width="10.5" height="10.5" fill="#ffb0dd"/>
<rect x="986" y="1302" width="10.5" height="10.5" fill="#ffadd9"/>
<rect x="996" y="1302" width="10.5" height="10.5" fill="#ffaad6"/>
<rect x="1006" y="1302" width="10.5" height="10.5" fill="#ffa7d2"/>
<rect x="1016" y="1302" width="10.5" height="10.5" fill="#ffa4cf"/>
<rect x="1026" y="1302" width="10.5" height="10.5" fill="#ffa1cb"/>
<rect x="1036" y="1302" width="10.5" height="10.5" fill="#ff9ec8"/>
<rect x="1046" y="1302" width="10.5" height="10.5" fill="#ff9bc5"/>
<rect x="1056" y="1302" width="10.5" height="10.5" fill="#ff99c1"/>
<rect x="1066" y="1302" width="10.5" height="10.5" fill="#ff96be"/>
<rect x="1076" y="1302" width="10.5" height="10.5" fill="#ff94bb"/>
<rect x="1086" y="1302" width="10.5" height="10.5" fill="#ff91b8"/>
<rect x="696" y="1312" width="10.5" height="10.5" fill="#a7cdff"/>
<rect x="706" y="1312" width="10.5" height="10.5" fill="#abccff"/>
<rect x="716" y="1312" width="10.5" height="10.5" fill="#afccff"/>
<rect x="726" y="1312" width="10.5" height="10.5" fill="#b3ccff"/>
<rect x="736" y="1312" width="10.5" height="10.5" fill="#b7ccff"/>
<rect x="746" y="1312" width="10.5" height="10.5" fill="#bcccff"/>
<rect x="756" y="1312" width="10.5" height="10.5" fill="#c0ccff"/>
<rect x="766" y="1312" width="10.5" height="10.5" fill="#c4cbff"/>
<rect x="776" y="1312" width="10.5" height="10.5" fill="#c8cbff"/>
<rect x="786" y="1312" width="10.5" height="10.5" fill="#cdcbff"/>
<rect x="796" y="1312" width="10.5" height="10.5" fill="#d1cbff"/>
<rect x="806" y="1312" width="10.5" height="10.5" fill="#d5cbff"/>
<rect x="816" y="1312" width="10.5" height="10.5" fill="#dacaff"/>
<rect x="826" y="1312" width="10.5" height="10.5" fill="#decaff"/>
<rect x="836" y="1312" width="10.5" height="10.5" fill="#e3caff"/>
<rect x="846" y="1312" width="10.5" height="10.5" fill="#e7caff"/>
<rect x="856" y="1312" width="10.5" height="10.5" fill="#ecc9ff"/>
<rect x="866" y="1312" width="10.5" height="10.5" fill="#f0c9ff"/>
<rect x="876" y="1312" width="10.5" height="10.5" fill="#f5c9ff"/>
<rect x="886" y="1312" width="10.5" height="10.5" fill="#fac9ff"/>
<rect x="896" y="1312" width="10.5" height="10.5" fill="#fec9ff"/>
<rect x="906" y="1312" width="10.5" height="10.5" fill="#ffc5fb"/>
<rect x="916" y="1312" width="10.5" height="10.5" fill="#ffc1f6"/>
<rect x="926" y="1312" width="10.5" height="10.5" fill="#ffbef2"/>
<rect x="936" y="1312" width="10.5" height="10.5" fill="#ffbaee"/>
<rect x="946" y="1312" width="10.5" height="10.5" fill="#ffb7e9"/>
<rect x="956" y="1312" width="10.5" height="10.5" fill="#ffb3e5"/>
<rect x="966" y="1312" width="10.5" height="10.5" fill="#ffb0e1"/>
<rect x="976" y="1312" width="10.5" height="10.5" fill="#ffadde"/>
<rect x="986" y="1312" width="10.5" height="10.5" fill="#ffaada"/>
<rect x="996" y="1312" width="10.5" height="10.5" fill="#ffa7d6"/>
<rect x="1006" y="1312" width="10.5" height="10.5" fill="#ffa4d3"/>
<rect x="1016" y="1312" width="10.5" height="10.5" fill="#ffa1cf"/>
<rect x="1026" y="1312" width="10.5" height="10.5" fill="#ff9ecc"/>
<rect x="1036" y="1312" width="10.5" height="10.5" fill="#ff9bc8"/>
<rect x="1046" y="1312" width="10.5" height="10.5" fill="#ff98c5"/>
<rect x="1056" y="1312" width="10.5" height="10.5" fill="#ff96c2"/>
<rect x="1066" y="1312" width="10.5" height="10.5" fill="#ff93bf"/>
<rect x="1076" y="1312" width="10.5" height="10.5" fill="#ff91bc"/>
<rect x="1086" y="1312" width="10.5" height="10.5" fill="#ff8eb9"/>
<rect x="696" y="1322" width="10.5" height="10.5" fill="#a7c9ff"/>
<rect x="706" y="1322" width="10.5" height="10.5" fill="#abc8ff"/>
<rect x="716" y="1322" width="10.5" height="10.5" fill="#afc8ff"/>
<rect x="726" y="1322" width="10.5" height="10.5" fill="#b3c8ff"/>
<rect x="736" y="1322" width="10.5" height="10.5" fill="#b8c8ff"/>
<rect x="746" y="1322" width="10.5" height="10.5" fill="#bcc8ff"/>
<rect x="756" y="1322" width="10.5" height="10.5" fill="#c0c7ff"/>
<rect x="766" y="1322" width="10.5" height="10.5" fill="#c4c7ff"/>
<rect x="776" y="1322" width="10.5" height="10.5" fill="#c8c7ff"/>
<rect x="786" y="1322" width="10.5" height="10.5" fill="#cdc7ff"/>
<rect x="796" y="1322" width="10.5" height="10.5" fill="#d1c7ff"/>
<rect x="806" y="1322" width="10.5" height="10.5" fill="#d5c6ff"/>
<rect x="816" y="1322" width="10.5" height="10.5" fill="#dac6ff"/>
<rect x="826" y="1322" width="10.5" height="10.5" fill="#dec6ff"/>
<rect x="836" y="1322" width="10.5" height="10.5" fill="#e3c6ff"/>
<rect x="846" y="1322" width="10.5" height="10.5" fill="#e7c5ff"/>
<rect x="856" y="1322" width="10.5" height="10.5" fill="#ecc5ff"/>
<rect x="866" y="1322" width="10.5" height="10.5" fill="#f0c5ff"/>
<rect x="876" y="1322" width="10.5" height="10.5" fill="#f5c5ff"/>
<rect x="886" y="1322" width="10.5" height="10.5" fill="#f9c5ff"/>
<rect x="896" y="1322" width="10.5" height="10.5" fill="#fec4ff"/>
<rect x="906" y="1322" width="10.5" height="10.5" fill="#ffc1fb"/>
<rect x="916" y="1322" width="10.5" height="10.5" fill="#ffbdf7"/>
<rect x="926" y="1322" width="10.5" height="10.5" fill="#ffbaf2"/>
<rect x="936" y="1322" width="10.5" height="10.5" fill="#ffb6ee"/>
<rect x="946" y="1322" width="10.5" height="10.5" fill="#ffb3ea"/>
<rect x="956" y="1322" width="10.5" height="10.5" fill="#ffb0e6"/>
<rect x="966" y="1322" width="10.5" height="10.5" fill="#fface2"/>
<rect x="976" y="1322" width="10.5" height="10.5" fill="#ffa9de"/>
<rect x="986" y="1322" width="10.5" height="10.5" fill="#ffa6da"/>
<rect x="996" y="1322" width="10.5" height="10.5" fill="#ffa3d7"/>
<rect x="1006" y="1322" width="10.5" height="10.5" fill="#ffa0d3"/>
<rect x="1016" y="1322" width="10.5" height="10.5" fill="#ff9dd0"/>
<rect x="1026" y="1322" width="10.5" height="10.5" fill="#ff9bcc"/>
<rect x="1036" y="1322" width="10.5" height="10.5" fill="#ff98c9"/>
<rect x="1046" y="1322" width="10.5" height="10.5" fill="#ff95c6"/>
<rect x="1056" y="1322" width="10.5" height="10.5" fill="#ff93c3"/>
<rect x="1066" y="1322" width="10.5" height="10.5" fill="#ff90c0"/>
<rect x="1076" y="1322" width="10.5" height="10.5" fill="#ff8ebd"/>
<rect x="1086" y="1322" width="10.5" height="10.5" fill="#ff8bba"/>
<rect x="696" y="1332" width="10.5" height="10.5" fill="#a7c5ff"/>
<rect x="706" y="1332" width="10.5" height="10.5" fill="#acc5ff"/>
<rect x="716" y="1332" width="10.5" height="10.5" fill="#b0c4ff"/>
<rect x="726" y="1332" width="10.5" height="10.5" fill="#b4c4ff"/>
<rect x="736" y="1332" width="10.5" height="10.5" fill="#b8c4ff"/>
<rect x="746" y="1332" width="10.5" height="10.5" fill="#bcc4ff"/>
<rect x="756" y="1332" width="10.5" height="10.5" fill="#c0c3ff"/>
<rect x="766" y="1332" width="10.5" height="10.5" fill="#c4c3ff"/>
<rect x="776" y="1332" width="10.5" height="10.5" fill="#c8c3ff"/>
<rect x="786" y="1332" width="10.5" height="10.5" fill="#cdc3ff"/>
<rect x="796" y="1332" width="10.5" height="10.5" fill="#d1c3ff"/>
<rect x="806" y="1332" width="10.5" height="10.5" fill="#d5c2ff"/>
<rect x="816" y="1332" width="10.5" height="10.5" fill="#dac2ff"/>
<rect x="826" y="1332" width="10.5" height="10.5" fill="#dec2ff"/>
<rect x="836" y="1332" width="10.5" height="10.5" fill="#e3c2ff"/>
<rect x="846" y="1332" width="10.5" height="10.5" fill="#e7c1ff"/>
<rect x="856" y="1332" width="10.5" height="10.5" fill="#ebc1ff"/>
<rect x="866" y="1332" width="10.5" height="10.5" fill="#f0c1ff"/>
<rect x="876" y="1332" width="10.5" height="10.5" fill="#f5c1ff"/>
<rect x="886" y="1332" width="10.5" height="10.5" fill="#f9c0ff"/>
<rect x="896" y="1332" width="10.5" height="10.5" fill="#fec0ff"/>
<rect x="906" y="1332" width="10.5" height="10.5" fill="#ffbdfc"/>
<rect x="916" y="1332" width="10.5" height="10.5" fill="#ffbaf7"/>
<rect x="926" y="1332" width="10.5" height="10.5" fill="#ffb6f3"/>
<rect x="936" y="1332" width="10.5" height="10.5" fill="#ffb3ee"/>
<rect x="946" y="1332" width="10.5" height="10.5" fill="#ffafea"/>
<rect x="956" y="1332" width="10.5" height="10.5" fill="#fface6"/>
<rect x="966" y="1332" width="10.5" height="10.5" fill="#ffa9e2"/>
<rect x="976" y="1332" width="10.5" height="10.5" fill="#ffa6df"/>
<rect x="986" y="1332" width="10.5" height="10.5" fill="#ffa3db"/>
<rect x="996" y="1332" width="10.5" height="10.5" fill="#ffa0d7"/>
<rect x="1006" y="1332" width="10.5" height="10.5" fill="#ff9dd4"/>
<rect x="1016" y="1332" width="10.5" height="10.5" fill="#ff9ad0"/>
<rect x="1026" y="1332" width="10.5" height="10.5" fill="#ff98cd"/>
<rect x="1036" y="1332" width="10.5" height="10.5" fill="#ff95ca"/>
<rect x="1046" y="1332" width="10.5" height="10.5" fill="#ff92c6"/>
<rect x="1056" y="1332" width="10.5" height="10.5" fill="#ff90c3"/>
<rect x="1066" y="1332" width="10.5" height="10.5" fill="#ff8dc0"/>
<rect x="1076" y="1332" width="10.5" height="10.5" fill="#ff8bbd"/>
<rect x="1086" y="1332" width="10.5" height="10.5" fill="#ff89ba"/>
</g></g>
<line x1="759" y1="1317" x2="1072" y2="1119.5" stroke="#000" stroke-width="3"/>
<rect x="884" y="1190" width="19.5" height="17" fill="none" stroke="#000" stroke-width="1.8"/>
<circle cx="914.6" cy="1176.5" r="6" fill="#333" stroke="#000" stroke-width="1.3"/>
<circle cx="899.5" cy="1180.5" r="6" fill="#999" stroke="#000" stroke-width="1.3"/>
<circle cx="892" cy="1183.5" r="6" fill="#bbb" stroke="#000" stroke-width="1.3"/>
<circle cx="887.4" cy="1186.3" r="6" fill="#ddd" stroke="#000" stroke-width="1.3"/>
<circle cx="899.5" cy="1190" r="6" fill="#777" stroke="#000" stroke-width="1.3"/>
<circle cx="893.8" cy="1192.5" r="6" fill="#aaa" stroke="#000" stroke-width="1.3"/>
<circle cx="897.4" cy="1205.6" r="6" fill="#1a1a1a" stroke="#000" stroke-width="1.3"/>
<circle cx="872.4" cy="1172.8" r="6" fill="#fff" stroke="#000" stroke-width="1.3"/>
<circle cx="1039.9" cy="1178.8" r="6" fill="#000" stroke="#000" stroke-width="1.3"/>
<rect x="716" y="1082" width="356" height="235" fill="none" stroke="#8c8c8c" stroke-width="2"/>
<line x1="708" y1="1150.3" x2="716" y2="1150.3" stroke="#cfcfcf" stroke-width="2"/>
<line x1="708" y1="1243.5" x2="716" y2="1243.5" stroke="#cfcfcf" stroke-width="2"/>
<line x1="732" y1="1317" x2="732" y2="1325" stroke="#cfcfcf" stroke-width="2"/>
<line x1="803" y1="1317" x2="803" y2="1325" stroke="#cfcfcf" stroke-width="2"/>
<line x1="874" y1="1317" x2="874" y2="1325" stroke="#cfcfcf" stroke-width="2"/>
<line x1="946" y1="1317" x2="946" y2="1325" stroke="#cfcfcf" stroke-width="2"/>
<line x1="1017" y1="1317" x2="1017" y2="1325" stroke="#cfcfcf" stroke-width="2"/>
</svg>
<div class="t" style="left:666.7px;top:1138.5px;font-size:22.5px;line-height:22.5px;color:#dcdcdc;transform:scaleX(0.9200);">0.34</div>
<div class="t" style="left:666.7px;top:1231.7px;font-size:22.5px;line-height:22.5px;color:#dcdcdc;transform:scaleX(0.9200);">0.32</div>
<div class="t" style="left:711.9px;top:1327.5px;font-size:22.5px;line-height:22.5px;color:#dcdcdc;transform:scaleX(0.9200);">0.29</div>
<div class="t" style="left:788.6px;top:1327.5px;font-size:22.5px;line-height:22.5px;color:#dcdcdc;transform:scaleX(0.9200);">0.3</div>
<div class="t" style="left:853.9px;top:1327.5px;font-size:22.5px;line-height:22.5px;color:#dcdcdc;transform:scaleX(0.9200);">0.31</div>
<div class="t" style="left:925.9px;top:1327.5px;font-size:22.5px;line-height:22.5px;color:#dcdcdc;transform:scaleX(0.9200);">0.32</div>
<div class="t" style="left:996.9px;top:1327.5px;font-size:22.5px;line-height:22.5px;color:#dcdcdc;transform:scaleX(0.9200);">0.33</div>
<div class="b" style="left:1086px;top:1040px;width:1198px;height:301px;background:#1c1c1c;"></div>
<div class="b" style="left:1088px;top:1041.5px;width:1196px;height:35px;background:linear-gradient(#333 0%,#2c2c2c 50%,#141414 52%,#101010 100%);"></div>
<div class="t" style="left:1301.6px;top:1048.7px;font-size:21px;line-height:21px;color:#f0f0f0;transform:scaleX(0.9200);">0</div>
<div class="t" style="left:1389.2px;top:1048.7px;font-size:21px;line-height:21px;color:#f0f0f0;transform:scaleX(0.9200);">10</div>
<div class="t" style="left:1482.1px;top:1048.7px;font-size:21px;line-height:21px;color:#f0f0f0;transform:scaleX(0.9200);">20</div>
<div class="t" style="left:1575.0px;top:1048.7px;font-size:21px;line-height:21px;color:#f0f0f0;transform:scaleX(0.9200);">30</div>
<div class="t" style="left:1667.9px;top:1048.7px;font-size:21px;line-height:21px;color:#f0f0f0;transform:scaleX(0.9200);">40</div>
<div class="t" style="left:1760.8px;top:1048.7px;font-size:21px;line-height:21px;color:#f0f0f0;transform:scaleX(0.9200);">50</div>
<div class="t" style="left:1853.7px;top:1048.7px;font-size:21px;line-height:21px;color:#f0f0f0;transform:scaleX(0.9200);">60</div>
<div class="t" style="left:1946.6px;top:1048.7px;font-size:21px;line-height:21px;color:#f0f0f0;transform:scaleX(0.9200);">70</div>
<div class="t" style="left:2039.5px;top:1048.7px;font-size:21px;line-height:21px;color:#f0f0f0;transform:scaleX(0.9200);">80</div>
<div class="t" style="left:2132.4px;top:1048.7px;font-size:21px;line-height:21px;color:#f0f0f0;transform:scaleX(0.9200);">90</div>
<div class="t" style="left:2219.9px;top:1048.7px;font-size:21px;line-height:21px;color:#f0f0f0;transform:scaleX(0.9200);">100</div>
<div class="b" style="left:1088px;top:1076.5px;width:1196px;height:32.94px;background:linear-gradient(to right,#474747,#3a3a3a);"></div>
<div class="t" style="left:1102.0px;top:1083.2px;font-size:21px;line-height:21px;color:#f2f2f2;font-weight:bold;transform:scaleX(0.8800);">x: CIE31</div>
<div class="t" style="left:1264.5px;top:1082.7px;font-size:21px;line-height:21px;color:#f0f0f0;transform:scaleX(0.8450);">0.3333</div>
<div class="t" style="left:1357.4px;top:1082.7px;font-size:21px;line-height:21px;color:#f0f0f0;transform:scaleX(0.8450);">0.3132</div>
<div class="t" style="left:1450.3px;top:1082.7px;font-size:21px;line-height:21px;color:#f0f0f0;transform:scaleX(0.8450);">0.3157</div>
<div class="t" style="left:1543.2px;top:1082.7px;font-size:21px;line-height:21px;color:#f0f0f0;transform:scaleX(0.8450);">0.3128</div>
<div class="t" style="left:1636.1px;top:1082.7px;font-size:21px;line-height:21px;color:#f0f0f0;transform:scaleX(0.8450);">0.3123</div>
<div class="t" style="left:1729.0px;top:1082.7px;font-size:21px;line-height:21px;color:#f0f0f0;transform:scaleX(0.8450);">0.3136</div>
<div class="t" style="left:1821.9px;top:1082.7px;font-size:21px;line-height:21px;color:#f0f0f0;transform:scaleX(0.8450);">0.3136</div>
<div class="t" style="left:1914.8px;top:1082.7px;font-size:21px;line-height:21px;color:#f0f0f0;transform:scaleX(0.8450);">0.3128</div>
<div class="t" style="left:2007.7px;top:1082.7px;font-size:21px;line-height:21px;color:#f0f0f0;transform:scaleX(0.8450);">0.3124</div>
<div class="t" style="left:2100.6px;top:1082.7px;font-size:21px;line-height:21px;color:#f0f0f0;transform:scaleX(0.8450);">0.3119</div>
<div class="t" style="left:2193.5px;top:1082.7px;font-size:21px;line-height:21px;color:#f0f0f0;transform:scaleX(0.8450);">0.3098</div>
<div class="b" style="left:1088px;top:1109.4px;width:1196px;height:32.94px;background:linear-gradient(to right,#8c8c8c,#7c7c7c);"></div>
<div class="t" style="left:1102.0px;top:1116.2px;font-size:21px;line-height:21px;color:#f2f2f2;font-weight:bold;transform:scaleX(0.8800);">y: CIE31</div>
<div class="t" style="left:1264.5px;top:1115.7px;font-size:21px;line-height:21px;color:#f0f0f0;transform:scaleX(0.8450);">0.3333</div>
<div class="t" style="left:1357.4px;top:1115.7px;font-size:21px;line-height:21px;color:#f0f0f0;transform:scaleX(0.8450);">0.3273</div>
<div class="t" style="left:1450.3px;top:1115.7px;font-size:21px;line-height:21px;color:#f0f0f0;transform:scaleX(0.8450);">0.3338</div>
<div class="t" style="left:1543.2px;top:1115.7px;font-size:21px;line-height:21px;color:#f0f0f0;transform:scaleX(0.8450);">0.3311</div>
<div class="t" style="left:1636.1px;top:1115.7px;font-size:21px;line-height:21px;color:#f0f0f0;transform:scaleX(0.8450);">0.3310</div>
<div class="t" style="left:1729.0px;top:1115.7px;font-size:21px;line-height:21px;color:#f0f0f0;transform:scaleX(0.8450);">0.3309</div>
<div class="t" style="left:1821.9px;top:1115.7px;font-size:21px;line-height:21px;color:#f0f0f0;transform:scaleX(0.8450);">0.3329</div>
<div class="b" style="left:1911px;top:1110.5px;width:93px;height:30.5px;background:#efefef;border:1px solid #c8c8c8;box-sizing:border-box;"></div>
<div class="t" style="left:1914.8px;top:1115.7px;font-size:21px;line-height:21px;color:#000;transform:scaleX(0.8450);">0.3305</div>
<div class="t" style="left:2007.7px;top:1115.7px;font-size:21px;line-height:21px;color:#f0f0f0;transform:scaleX(0.8450);">0.3319</div>
<div class="t" style="left:2100.6px;top:1115.7px;font-size:21px;line-height:21px;color:#f0f0f0;transform:scaleX(0.8450);">0.3318</div>
<div class="t" style="left:2193.5px;top:1115.7px;font-size:21px;line-height:21px;color:#f0f0f0;transform:scaleX(0.8450);">0.3344</div>
<div class="b" style="left:1088px;top:1142.4px;width:1196px;height:32.94px;background:linear-gradient(to right,#474747,#3a3a3a);"></div>
<div class="t" style="left:1102.0px;top:1149.1px;font-size:21px;line-height:21px;color:#f2f2f2;font-weight:bold;transform:scaleX(0.8800);">Y</div>
<div class="t" style="left:1264.5px;top:1148.6px;font-size:21px;line-height:21px;color:#f0f0f0;transform:scaleX(0.8450);">0.0000</div>
<div class="t" style="left:1357.4px;top:1148.6px;font-size:21px;line-height:21px;color:#f0f0f0;transform:scaleX(0.8450);">9.5991</div>
<div class="t" style="left:1450.3px;top:1148.6px;font-size:21px;line-height:21px;color:#f0f0f0;transform:scaleX(0.8450);">30.8598</div>
<div class="t" style="left:1543.2px;top:1148.6px;font-size:21px;line-height:21px;color:#f0f0f0;transform:scaleX(0.8450);">67.3479</div>
<div class="t" style="left:1636.1px;top:1148.6px;font-size:21px;line-height:21px;color:#f0f0f0;transform:scaleX(0.8450);">123.3382</div>
<div class="t" style="left:1729.0px;top:1148.6px;font-size:21px;line-height:21px;color:#f0f0f0;transform:scaleX(0.8450);">200.7324</div>
<div class="t" style="left:1821.9px;top:1148.6px;font-size:21px;line-height:21px;color:#f0f0f0;transform:scaleX(0.8450);">296.0824</div>
<div class="t" style="left:1914.8px;top:1148.6px;font-size:21px;line-height:21px;color:#f0f0f0;transform:scaleX(0.8450);">411.9408</div>
<div class="t" style="left:2007.7px;top:1148.6px;font-size:21px;line-height:21px;color:#f0f0f0;transform:scaleX(0.8450);">561.4586</div>
<div class="t" style="left:2100.6px;top:1148.6px;font-size:21px;line-height:21px;color:#f0f0f0;transform:scaleX(0.8450);">738.7342</div>
<div class="t" style="left:2193.5px;top:1148.6px;font-size:21px;line-height:21px;color:#f0f0f0;transform:scaleX(0.8450);">975.1672</div>
<div class="b" style="left:1088px;top:1175.3px;width:1196px;height:32.94px;background:linear-gradient(to right,#8c8c8c,#7c7c7c);"></div>
<div class="t" style="left:1102.0px;top:1182.0px;font-size:21px;line-height:21px;color:#f2f2f2;font-weight:bold;transform:scaleX(0.8800);">Target Y</div>
<div class="t" style="left:1264.5px;top:1181.5px;font-size:21px;line-height:21px;color:#f0f0f0;transform:scaleX(0.8450);">0.0000</div>
<div class="t" style="left:1357.4px;top:1181.5px;font-size:21px;line-height:21px;color:#f0f0f0;transform:scaleX(0.8450);">10.0733</div>
<div class="t" style="left:1450.3px;top:1181.5px;font-size:21px;line-height:21px;color:#f0f0f0;transform:scaleX(0.8450);">32.2827</div>
<div class="t" style="left:1543.2px;top:1181.5px;font-size:21px;line-height:21px;color:#f0f0f0;transform:scaleX(0.8450);">70.4771</div>
<div class="t" style="left:1636.1px;top:1181.5px;font-size:21px;line-height:21px;color:#f0f0f0;transform:scaleX(0.8450);">129.5688</div>
<div class="t" style="left:1729.0px;top:1181.5px;font-size:21px;line-height:21px;color:#f0f0f0;transform:scaleX(0.8450);">210.5001</div>
<div class="t" style="left:1821.9px;top:1181.5px;font-size:21px;line-height:21px;color:#f0f0f0;transform:scaleX(0.8450);">310.6364</div>
<div class="t" style="left:1914.8px;top:1181.5px;font-size:21px;line-height:21px;color:#f0f0f0;transform:scaleX(0.8450);">434.1456</div>
<div class="t" style="left:2007.7px;top:1181.5px;font-size:21px;line-height:21px;color:#f0f0f0;transform:scaleX(0.8450);">588.8326</div>
<div class="t" style="left:2100.6px;top:1181.5px;font-size:21px;line-height:21px;color:#f0f0f0;transform:scaleX(0.8450);">771.6478</div>
<div class="t" style="left:2193.5px;top:1181.5px;font-size:21px;line-height:21px;color:#f0f0f0;transform:scaleX(0.8450);">975.1672</div>
<div class="b" style="left:1088px;top:1208.3px;width:1196px;height:32.94px;background:linear-gradient(to right,#474747,#3a3a3a);"></div>
<div class="t" style="left:1102.0px;top:1215.0px;font-size:21px;line-height:21px;color:#f2f2f2;font-weight:bold;transform:scaleX(0.8800);">Gamma Log/Log</div>
<div class="t" style="left:1264.5px;top:1214.5px;font-size:21px;line-height:21px;color:#f0f0f0;transform:scaleX(0.8450);">1.2778</div>
<div class="t" style="left:1357.4px;top:1214.5px;font-size:21px;line-height:21px;color:#f0f0f0;transform:scaleX(0.8450);">2.0239</div>
<div class="t" style="left:1450.3px;top:1214.5px;font-size:21px;line-height:21px;color:#f0f0f0;transform:scaleX(0.8450);">2.1456</div>
<div class="t" style="left:1543.2px;top:1214.5px;font-size:21px;line-height:21px;color:#f0f0f0;transform:scaleX(0.8450);">2.2079</div>
<div class="t" style="left:1636.1px;top:1214.5px;font-size:21px;line-height:21px;color:#f0f0f0;transform:scaleX(0.8450);">2.2566</div>
<div class="t" style="left:1729.0px;top:1214.5px;font-size:21px;line-height:21px;color:#f0f0f0;transform:scaleX(0.8450);">2.2933</div>
<div class="t" style="left:1821.9px;top:1214.5px;font-size:21px;line-height:21px;color:#f0f0f0;transform:scaleX(0.8450);">2.3334</div>
<div class="t" style="left:1914.8px;top:1214.5px;font-size:21px;line-height:21px;color:#f0f0f0;transform:scaleX(0.8450);">2.3972</div>
<div class="t" style="left:2007.7px;top:1214.5px;font-size:21px;line-height:21px;color:#f0f0f0;transform:scaleX(0.8450);">2.4741</div>
<div class="t" style="left:2100.6px;top:1214.5px;font-size:21px;line-height:21px;color:#f0f0f0;transform:scaleX(0.8450);">2.6910</div>
<div class="t" style="left:2193.5px;top:1214.5px;font-size:21px;line-height:21px;color:#f0f0f0;transform:scaleX(0.8450);">2.2749</div>
<div class="b" style="left:1088px;top:1241.2px;width:1196px;height:32.94px;background:linear-gradient(to right,#8c8c8c,#7c7c7c);"></div>
<div class="t" style="left:1102.0px;top:1247.9px;font-size:21px;line-height:21px;color:#f2f2f2;font-weight:bold;transform:scaleX(0.8800);">CCT</div>
<div class="t" style="left:1264.5px;top:1247.4px;font-size:21px;line-height:21px;color:#f0f0f0;transform:scaleX(0.8450);">5456.0000</div>
<div class="t" style="left:1357.4px;top:1247.4px;font-size:21px;line-height:21px;color:#f0f0f0;transform:scaleX(0.8450);">6488.0000</div>
<div class="t" style="left:1450.3px;top:1247.4px;font-size:21px;line-height:21px;color:#f0f0f0;transform:scaleX(0.8450);">6312.0000</div>
<div class="t" style="left:1543.2px;top:1247.4px;font-size:21px;line-height:21px;color:#f0f0f0;transform:scaleX(0.8450);">6485.0000</div>
<div class="t" style="left:1636.1px;top:1247.4px;font-size:21px;line-height:21px;color:#f0f0f0;transform:scaleX(0.8450);">6509.0000</div>
<div class="t" style="left:1729.0px;top:1247.4px;font-size:21px;line-height:21px;color:#f0f0f0;transform:scaleX(0.8450);">6440.0000</div>
<div class="t" style="left:1821.9px;top:1247.4px;font-size:21px;line-height:21px;color:#f0f0f0;transform:scaleX(0.8450);">6427.0000</div>
<div class="t" style="left:1914.8px;top:1247.4px;font-size:21px;line-height:21px;color:#f0f0f0;transform:scaleX(0.8450);">6486.0000</div>
<div class="t" style="left:2007.7px;top:1247.4px;font-size:21px;line-height:21px;color:#f0f0f0;transform:scaleX(0.8450);">6501.0000</div>
<div class="t" style="left:2100.6px;top:1247.4px;font-size:21px;line-height:21px;color:#f0f0f0;transform:scaleX(0.8450);">6528.0000</div>
<div class="t" style="left:2193.5px;top:1247.4px;font-size:21px;line-height:21px;color:#f0f0f0;transform:scaleX(0.8450);">6617.0000</div>
<div class="b" style="left:1088px;top:1274.1px;width:1196px;height:32.94px;background:linear-gradient(to right,#474747,#3a3a3a);"></div>
<div class="t" style="left:1102.0px;top:1280.9px;font-size:21px;line-height:21px;color:#f2f2f2;font-weight:bold;transform:scaleX(0.8800);">ΔE 2000</div>
<div class="t" style="left:1264.5px;top:1280.4px;font-size:21px;line-height:21px;color:#f0f0f0;transform:scaleX(0.8450);">0.0000</div>
<div class="t" style="left:1357.4px;top:1280.4px;font-size:21px;line-height:21px;color:#f0f0f0;transform:scaleX(0.8450);">0.4548</div>
<div class="t" style="left:1450.3px;top:1280.4px;font-size:21px;line-height:21px;color:#f0f0f0;transform:scaleX(0.8450);">0.9313</div>
<div class="t" style="left:1543.2px;top:1280.4px;font-size:21px;line-height:21px;color:#f0f0f0;transform:scaleX(0.8450);">0.9177</div>
<div class="t" style="left:1636.1px;top:1280.4px;font-size:21px;line-height:21px;color:#f0f0f0;transform:scaleX(0.8450);">1.3102</div>
<div class="t" style="left:1729.0px;top:1280.4px;font-size:21px;line-height:21px;color:#f0f0f0;transform:scaleX(0.8450);">1.2688</div>
<div class="t" style="left:1821.9px;top:1280.4px;font-size:21px;line-height:21px;color:#f0f0f0;transform:scaleX(0.8450);">2.0706</div>
<div class="t" style="left:1914.8px;top:1280.4px;font-size:21px;line-height:21px;color:#f0f0f0;transform:scaleX(0.8450);">1.4781</div>
<div class="t" style="left:2007.7px;top:1280.4px;font-size:21px;line-height:21px;color:#f0f0f0;transform:scaleX(0.8450);">2.3649</div>
<div class="t" style="left:2100.6px;top:1280.4px;font-size:21px;line-height:21px;color:#f0f0f0;transform:scaleX(0.8450);">2.6920</div>
<div class="t" style="left:2193.5px;top:1280.4px;font-size:21px;line-height:21px;color:#f0f0f0;transform:scaleX(0.8450);">5.6720</div>
<div class="b" style="left:1088px;top:1307.1px;width:1196px;height:32.94px;background:linear-gradient(to right,#8c8c8c,#7c7c7c);"></div>
<div class="t" style="left:1102.0px;top:1313.8px;font-size:21px;line-height:21px;color:#f2f2f2;font-weight:bold;transform:scaleX(0.8800);">ΔE ITP</div>
<div class="t" style="left:1264.5px;top:1313.3px;font-size:21px;line-height:21px;color:#f0f0f0;transform:scaleX(0.8450);">0.0086</div>
<div class="t" style="left:1357.4px;top:1313.3px;font-size:21px;line-height:21px;color:#f0f0f0;transform:scaleX(0.8450);">2.7970</div>
<div class="t" style="left:1450.3px;top:1313.3px;font-size:21px;line-height:21px;color:#f0f0f0;transform:scaleX(0.8450);">3.5433</div>
<div class="t" style="left:1543.2px;top:1313.3px;font-size:21px;line-height:21px;color:#f0f0f0;transform:scaleX(0.8450);">3.3720</div>
<div class="t" style="left:1636.1px;top:1313.3px;font-size:21px;line-height:21px;color:#f0f0f0;transform:scaleX(0.8450);">3.8287</div>
<div class="t" style="left:1729.0px;top:1313.3px;font-size:21px;line-height:21px;color:#f0f0f0;transform:scaleX(0.8450);">3.7034</div>
<div class="t" style="left:1821.9px;top:1313.3px;font-size:21px;line-height:21px;color:#f0f0f0;transform:scaleX(0.8450);">4.0937</div>
<div class="t" style="left:1914.8px;top:1313.3px;font-size:21px;line-height:21px;color:#f0f0f0;transform:scaleX(0.8450);">4.1621</div>
<div class="t" style="left:2007.7px;top:1313.3px;font-size:21px;line-height:21px;color:#f0f0f0;transform:scaleX(0.8450);">4.0942</div>
<div class="t" style="left:2100.6px;top:1313.3px;font-size:21px;line-height:21px;color:#f0f0f0;transform:scaleX(0.8450);">3.9086</div>
<div class="t" style="left:2193.5px;top:1313.3px;font-size:21px;line-height:21px;color:#f0f0f0;transform:scaleX(0.8450);">4.0266</div>
<div class="b" style="left:2554px;top:88px;width:6px;height:1402px;background:linear-gradient(to right,rgba(30,30,30,0),rgba(30,30,30,0.9));"></div>
<div class="b" style="left:200px;top:1490px;width:2360px;height:62px;background:linear-gradient(#474747,#2e2e2e 60%,#262626);"></div>
<div class="b" style="left:200px;top:1551px;width:1672px;height:1px;background:#1e1e1e;"></div>
<div class="b" style="left:201.0px;top:1490px;width:150px;height:61px;border-radius:5px 5px 4px 4px;background:linear-gradient(#b0b0b0,#8a8a8a 20%,#707070 60%,#585858);"></div>
<div class="b" style="left:206.0px;top:1495px;width:140px;height:36px;border-radius:4px;background:linear-gradient(rgb(0,0,0),rgb(0,0,0));box-shadow:inset 0 1px 1px rgba(0,0,0,0.3);"></div>
<div class="t" style="left:273.2px;top:1536.8px;font-size:11px;line-height:11px;color:#222;font-weight:bold;font-family:"Liberation Serif",serif;">0</div>
<div class="b" style="left:353.0px;top:1490px;width:150px;height:61px;border-radius:5px 5px 4px 4px;background:linear-gradient(#b0b0b0,#8a8a8a 20%,#707070 60%,#585858);"></div>
<div class="b" style="left:358.0px;top:1495px;width:140px;height:36px;border-radius:4px;background:linear-gradient(rgb(26,26,26),rgb(26,26,26));box-shadow:inset 0 1px 1px rgba(0,0,0,0.3);"></div>
<div class="t" style="left:422.5px;top:1536.8px;font-size:11px;line-height:11px;color:#222;font-weight:bold;font-family:"Liberation Serif",serif;">10</div>
<div class="b" style="left:505.0px;top:1490px;width:150px;height:61px;border-radius:5px 5px 4px 4px;background:linear-gradient(#b0b0b0,#8a8a8a 20%,#707070 60%,#585858);"></div>
<div class="b" style="left:510.0px;top:1495px;width:140px;height:36px;border-radius:4px;background:linear-gradient(rgb(51,51,51),rgb(51,51,51));box-shadow:inset 0 1px 1px rgba(0,0,0,0.3);"></div>
<div class="t" style="left:574.5px;top:1536.8px;font-size:11px;line-height:11px;color:#222;font-weight:bold;font-family:"Liberation Serif",serif;">20</div>
<div class="b" style="left:657.0px;top:1490px;width:150px;height:61px;border-radius:5px 5px 4px 4px;background:linear-gradient(#b0b0b0,#8a8a8a 20%,#707070 60%,#585858);"></div>
<div class="b" style="left:662.0px;top:1495px;width:140px;height:36px;border-radius:4px;background:linear-gradient(rgb(77,77,77),rgb(77,77,77));box-shadow:inset 0 1px 1px rgba(0,0,0,0.3);"></div>
<div class="t" style="left:726.5px;top:1536.8px;font-size:11px;line-height:11px;color:#222;font-weight:bold;font-family:"Liberation Serif",serif;">30</div>
<div class="b" style="left:809.0px;top:1490px;width:150px;height:61px;border-radius:5px 5px 4px 4px;background:linear-gradient(#b0b0b0,#8a8a8a 20%,#707070 60%,#585858);"></div>
<div class="b" style="left:814.0px;top:1495px;width:140px;height:36px;border-radius:4px;background:linear-gradient(rgb(102,102,102),rgb(102,102,102));box-shadow:inset 0 1px 1px rgba(0,0,0,0.3);"></div>
<div class="t" style="left:878.5px;top:1536.8px;font-size:11px;line-height:11px;color:#222;font-weight:bold;font-family:"Liberation Serif",serif;">40</div>
<div class="b" style="left:961.0px;top:1490px;width:150px;height:61px;border-radius:5px 5px 4px 4px;background:linear-gradient(#b0b0b0,#8a8a8a 20%,#707070 60%,#585858);"></div>
<div class="b" style="left:966.0px;top:1495px;width:140px;height:36px;border-radius:4px;background:linear-gradient(rgb(128,128,128),rgb(128,128,128));box-shadow:inset 0 1px 1px rgba(0,0,0,0.3);"></div>
<div class="t" style="left:1030.5px;top:1536.8px;font-size:11px;line-height:11px;color:#222;font-weight:bold;font-family:"Liberation Serif",serif;">50</div>
<div class="b" style="left:1113.0px;top:1490px;width:150px;height:61px;border-radius:5px 5px 4px 4px;background:linear-gradient(#b0b0b0,#8a8a8a 20%,#707070 60%,#585858);"></div>
<div class="b" style="left:1118.0px;top:1495px;width:140px;height:36px;border-radius:4px;background:linear-gradient(rgb(153,153,153),rgb(153,153,153));box-shadow:inset 0 1px 1px rgba(0,0,0,0.3);"></div>
<div class="t" style="left:1182.5px;top:1536.8px;font-size:11px;line-height:11px;color:#222;font-weight:bold;font-family:"Liberation Serif",serif;">60</div>
<div class="b" style="left:1265.0px;top:1490px;width:150px;height:61px;border-radius:5px 5px 4px 4px;background:linear-gradient(#b0b0b0,#8a8a8a 20%,#707070 60%,#585858);"></div>
<div class="b" style="left:1270.0px;top:1495px;width:140px;height:36px;border-radius:4px;background:linear-gradient(rgb(179,179,179),rgb(179,179,179));box-shadow:inset 0 1px 1px rgba(0,0,0,0.3);"></div>
<div class="t" style="left:1334.5px;top:1536.8px;font-size:11px;line-height:11px;color:#222;font-weight:bold;font-family:"Liberation Serif",serif;">70</div>
<div class="b" style="left:1417.0px;top:1490px;width:150px;height:61px;border-radius:5px 5px 4px 4px;background:linear-gradient(#b0b0b0,#8a8a8a 20%,#707070 60%,#585858);"></div>
<div class="b" style="left:1422.0px;top:1495px;width:140px;height:36px;border-radius:4px;background:linear-gradient(rgb(204,204,204),rgb(204,204,204));box-shadow:inset 0 1px 1px rgba(0,0,0,0.3);"></div>
<div class="t" style="left:1486.5px;top:1536.8px;font-size:11px;line-height:11px;color:#222;font-weight:bold;font-family:"Liberation Serif",serif;">80</div>
<div class="b" style="left:1569.0px;top:1490px;width:150px;height:61px;border-radius:5px 5px 4px 4px;background:linear-gradient(#b0b0b0,#8a8a8a 20%,#707070 60%,#585858);"></div>
<div class="b" style="left:1574.0px;top:1495px;width:140px;height:36px;border-radius:4px;background:linear-gradient(rgb(230,230,230),rgb(230,230,230));box-shadow:inset 0 1px 1px rgba(0,0,0,0.3);"></div>
<div class="t" style="left:1638.5px;top:1536.8px;font-size:11px;line-height:11px;color:#222;font-weight:bold;font-family:"Liberation Serif",serif;">90</div>
<div class="b" style="left:1721.0px;top:1490px;width:150px;height:62px;border-radius:5px 5px 0 0;background:#1c1c1c;"></div>
<div class="b" style="left:1727.0px;top:1495px;width:139px;height:36px;border-radius:3px;background:#fff;"></div>
<div class="t" style="left:1787.8px;top:1536.8px;font-size:11px;line-height:11px;color:#fff;font-weight:bold;font-family:"Liberation Serif",serif;">100</div>
<div class="b" style="left:2237px;top:1490px;width:323px;height:62px;background:linear-gradient(#505050,#3a3a3a);border-radius:5px 0 0 0;"></div>
<div class="b" style="left:2285px;top:1491px;width:45px;height:29px;background:linear-gradient(#9a9a9a,#6e6e6e);border-radius:4px 4px 0 0;"></div>
<div class="b" style="left:2331px;top:1491px;width:45px;height:29px;background:linear-gradient(#9a9a9a,#6e6e6e);border-radius:4px 4px 0 0;"></div>
<div class="b" style="left:2377px;top:1491px;width:45px;height:29px;background:linear-gradient(#9a9a9a,#6e6e6e);border-radius:4px 4px 0 0;"></div>
<div class="b" style="left:2423px;top:1491px;width:45px;height:29px;background:linear-gradient(#9a9a9a,#6e6e6e);border-radius:4px 4px 0 0;"></div>
<div class="b" style="left:2469px;top:1491px;width:45px;height:29px;background:linear-gradient(#9a9a9a,#6e6e6e);border-radius:4px 4px 0 0;"></div>
<div class="b" style="left:2515px;top:1491px;width:45px;height:29px;background:linear-gradient(#9a9a9a,#6e6e6e);border-radius:4px 4px 0 0;"></div>
<div class="b" style="left:2237px;top:1508px;width:48px;height:44px;background:linear-gradient(#7a7a7a,#5a5a5a);border-radius:5px 0 0 0;"></div>
<div class="b" style="left:2246px;top:1515px;width:30px;height:29px;border:3px solid #222;border-radius:4px;box-sizing:border-box;background:#8a8a8a;"></div>
<div class="b" style="left:2254px;top:1522px;width:14px;height:14px;background:#000;"></div>
<div class="b" style="left:2286px;top:1521px;width:135px;height:31px;background:linear-gradient(#c4c4c4,#a0a0a0 50%,#8e8e8e);border-radius:5px 0 0 0;"></div>
<div class="b" style="left:2423px;top:1521px;width:137px;height:31px;background:linear-gradient(#c4c4c4,#a0a0a0 50%,#8e8e8e);"></div>
<div class="b" style="left:2307px;top:1526px;width:20px;height:20px;border-radius:50%;background:radial-gradient(circle at 50% 35%,#888,#b0b0b0 80%);"></div>
<div class="b" style="left:2520px;top:1526px;width:20px;height:20px;border-radius:50%;background:radial-gradient(circle at 50% 35%,#888,#b0b0b0 80%);"></div>
<svg class="b" style="left:2309px;top:1529px" width="16" height="14"><path d="M7 2 L2 7 L7 12 M13 2 L8 7 L13 12" fill="none" stroke="#333" stroke-width="1.8"/></svg>
<svg class="b" style="left:2522px;top:1529px" width="16" height="14"><path d="M3 2 L8 7 L3 12 M9 2 L14 7 L9 12" fill="none" stroke="#333" stroke-width="1.8"/></svg>
<div class="t" style="left:2344.0px;top:1523.0px;font-size:26px;line-height:26px;color:#2a2a2a;transform:scaleX(0.8650);">Back</div>
<div class="t" style="left:2450.0px;top:1523.0px;font-size:26px;line-height:26px;color:#2a2a2a;transform:scaleX(0.9727);">Next</div>
<svg class="b" style="left:2165px;top:1460px" width="395" height="85" viewBox="2165 1460 395 85"><path d="M2173.8 1468.7 L2224.9 1478.4 L2227.4 1509.3 M2173.8 1468.7 L2176.2 1516.6 L2207.1 1535.2 L2263.9 1519 L2187.6 1513.3 M2190 1488.1 L2207.1 1506 L2232.2 1468.7" fill="none" stroke="rgba(225,225,225,0.6)" stroke-width="6" stroke-linejoin="round" stroke-linecap="round"/><path d="M2173.8 1468.7 L2224.9 1478.4 L2227.4 1509.3 M2173.8 1468.7 L2176.2 1516.6 L2207.1 1535.2 L2263.9 1519 L2187.6 1513.3 M2190 1488.1 L2207.1 1506 L2232.2 1468.7" fill="none" stroke="rgba(150,40,48,0.85)" stroke-width="3" stroke-linejoin="round" stroke-linecap="round"/></svg>
<div class="t" style="left:2234px;top:1478.0px;font-size:35px;line-height:35px;font-weight:bold;color:rgba(150,45,50,0.75);-webkit-text-stroke:1.2px rgba(235,235,235,0.7);transform:scaleX(0.9742);">NOTEBOOK</div>
<div class="t" style="left:2431px;top:1478.0px;font-size:35px;line-height:35px;font-weight:bold;color:rgba(40,40,40,0.6);-webkit-text-stroke:1.2px rgba(235,235,235,0.7);transform:scaleX(0.9562);">CHECK</div>
</body></html>
